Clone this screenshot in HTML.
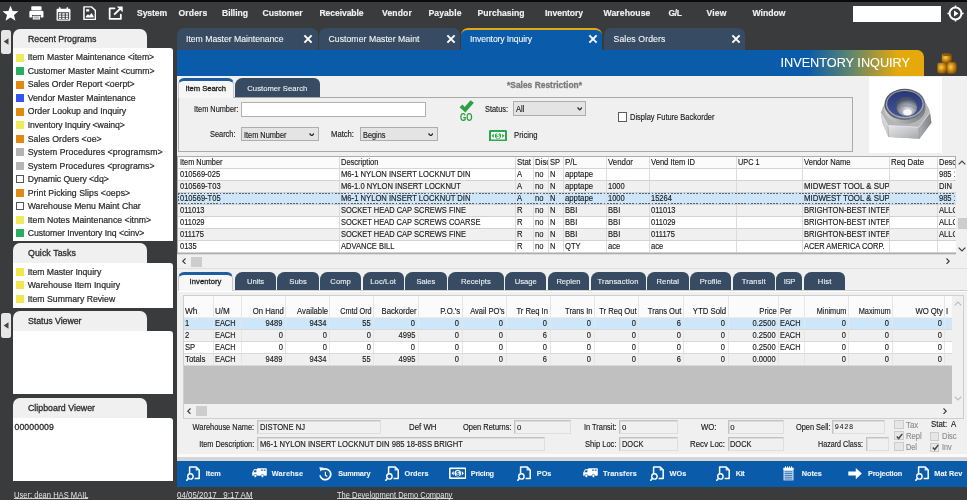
<!DOCTYPE html>
<html lang="en"><head><meta charset="utf-8"><title>Inventory Inquiry</title><style>
html,body{margin:0;padding:0;overflow:hidden;}
html{width:967px;height:500px;}
body{width:967px;height:500px;overflow:hidden;background:#3a3b3d;font-family:"Liberation Sans", sans-serif;font-size:11px;position:relative;}
div,span.t,svg{position:absolute;box-sizing:border-box;}
span.t{white-space:pre;display:block;-webkit-text-stroke:0.3px;}
span.x{-webkit-text-stroke:0.15px;}
#root{left:0;top:0;width:967px;height:500px;will-change:transform;overflow:hidden;}
</style></head>
<body>
<div id="root">
<div style="left:0px;top:0px;width:967px;height:2px;background:#0a0a0a;"></div>
<svg style="left:1.5px;top:5.3px" width="17" height="16.3" viewBox="0 0 19 18"><path fill="#fff" d="M9.5 0.6 L11.9 6.6 L18.4 7 L13.4 11.1 L15 17.4 L9.5 13.9 L4 17.4 L5.6 11.1 L0.6 7 L7.1 6.6 Z"/></svg>
<svg style="left:29.2px;top:6.1px" width="14.8" height="14.3" viewBox="0 0 17 16" preserveAspectRatio="none"><g fill="#fff"><rect x="2.6" y="0.3" width="11.8" height="4.4" rx="0.8"/><path d="M2 5.2h13a1.6 1.6 0 0 1 1.6 1.6v5.2a1 1 0 0 1-1 1H13.6V10H3.4v3H1.4a1 1 0 0 1-1-1V6.8A1.6 1.6 0 0 1 2 5.2z"/><rect x="4.3" y="10.9" width="8.4" height="4.3" rx="0.5"/><rect x="5.2" y="11.6" width="6.6" height="2.6" fill="#b9b9b9"/></g></svg>
<svg style="left:55.5px;top:6.5px" width="15" height="14.2" viewBox="0 0 16 16" preserveAspectRatio="none"><g fill="#fff"><rect x="3" y="0.3" width="1.8" height="3" rx="0.6"/><rect x="11.2" y="0.3" width="1.8" height="3" rx="0.6"/><path fill-rule="evenodd" d="M1.6 2h12.8a1 1 0 0 1 1 1v11.4a1 1 0 0 1-1 1H1.6a1 1 0 0 1-1-1V3a1 1 0 0 1 1-1zM2 6v8h12V6z"/><rect x="3" y="7" width="2.6" height="1.7"/><rect x="6.7" y="7" width="2.6" height="1.7"/><rect x="10.4" y="7" width="2.6" height="1.7"/><rect x="3" y="9.5" width="2.6" height="1.7"/><rect x="6.7" y="9.5" width="2.6" height="1.7"/><rect x="10.4" y="9.5" width="2.6" height="1.7"/><rect x="3" y="12" width="2.6" height="1.5"/><rect x="6.7" y="12" width="2.6" height="1.5"/><rect x="10.4" y="12" width="2.6" height="1.5"/></g></svg>
<svg style="left:82.5px;top:6.3px" width="13.4" height="14.3" viewBox="0 0 14 16" preserveAspectRatio="none"><path fill="none" stroke="#fff" stroke-width="1.6" stroke-linejoin="round" d="M1 1h8l4 4v10H1z"/><path fill="#fff" d="M3 11.6l2.2-2.4 1.5 1.5 2.2-3 2.2 3.9v1.2H3z"/><rect x="3.3" y="3.6" width="3.2" height="2.6" fill="#fff"/></svg>
<svg style="left:107.8px;top:6.3px" width="15.8" height="14.4" viewBox="0 0 17 16" preserveAspectRatio="none"><path fill="none" stroke="#fff" stroke-width="1.9" stroke-linejoin="round" stroke-linecap="round" d="M7 2.6H1.8v11.8h12V9.6"/><path fill="none" stroke="#fff" stroke-width="2.1" d="M6.6 9.6L14.6 1.6"/><path fill="#fff" d="M9.4 0.6h6.4v6.4z"/></svg>
<span class="t" style="top:4.700px;height:17.20px;line-height:17.20px;font-size:8.6px;color:#f2f2f2;font-weight:bold;left:137.00px;letter-spacing:-0.096px;-webkit-text-stroke:0.15px;">System</span>
<span class="t" style="top:4.700px;height:17.20px;line-height:17.20px;font-size:8.6px;color:#f2f2f2;font-weight:bold;left:178.50px;letter-spacing:0.135px;-webkit-text-stroke:0.15px;">Orders</span>
<span class="t" style="top:4.700px;height:17.20px;line-height:17.20px;font-size:8.6px;color:#f2f2f2;font-weight:bold;left:222.00px;letter-spacing:-0.038px;-webkit-text-stroke:0.15px;">Billing</span>
<span class="t" style="top:4.700px;height:17.20px;line-height:17.20px;font-size:8.6px;color:#f2f2f2;font-weight:bold;left:262.50px;letter-spacing:-0.016px;-webkit-text-stroke:0.15px;">Customer</span>
<span class="t" style="top:4.700px;height:17.20px;line-height:17.20px;font-size:8.6px;color:#f2f2f2;font-weight:bold;left:319.50px;letter-spacing:-0.092px;-webkit-text-stroke:0.15px;">Receivable</span>
<span class="t" style="top:4.700px;height:17.20px;line-height:17.20px;font-size:8.6px;color:#f2f2f2;font-weight:bold;left:382.00px;letter-spacing:0.143px;-webkit-text-stroke:0.15px;">Vendor</span>
<span class="t" style="top:4.700px;height:17.20px;line-height:17.20px;font-size:8.6px;color:#f2f2f2;font-weight:bold;left:428.50px;letter-spacing:0.071px;-webkit-text-stroke:0.15px;">Payable</span>
<span class="t" style="top:4.700px;height:17.20px;line-height:17.20px;font-size:8.6px;color:#f2f2f2;font-weight:bold;left:477.50px;letter-spacing:0.019px;-webkit-text-stroke:0.15px;">Purchasing</span>
<span class="t" style="top:4.700px;height:17.20px;line-height:17.20px;font-size:8.6px;color:#f2f2f2;font-weight:bold;left:545.00px;letter-spacing:-0.076px;-webkit-text-stroke:0.15px;">Inventory</span>
<span class="t" style="top:4.700px;height:17.20px;line-height:17.20px;font-size:8.6px;color:#f2f2f2;font-weight:bold;left:603.50px;letter-spacing:0.109px;-webkit-text-stroke:0.15px;">Warehouse</span>
<span class="t" style="top:4.700px;height:17.20px;line-height:17.20px;font-size:8.6px;color:#f2f2f2;font-weight:bold;left:668.50px;letter-spacing:-0.443px;-webkit-text-stroke:0.15px;">G/L</span>
<span class="t" style="top:4.700px;height:17.20px;line-height:17.20px;font-size:8.6px;color:#f2f2f2;font-weight:bold;left:706.50px;letter-spacing:0.141px;-webkit-text-stroke:0.15px;">View</span>
<span class="t" style="top:4.700px;height:17.20px;line-height:17.20px;font-size:8.6px;color:#f2f2f2;font-weight:bold;left:752.50px;letter-spacing:0.023px;-webkit-text-stroke:0.15px;">Window</span>
<div style="left:852.5px;top:6px;width:88.5px;height:15.5px;background:#ffffff;"></div>
<svg style="left:947px;top:5px" width="17" height="17" viewBox="0 0 17 17"><circle cx="8.5" cy="8.5" r="5.9" fill="none" stroke="#fff" stroke-width="2"/><path fill="#fff" d="M7 5.6l4.4 2.9L7 11.4z"/><g stroke="#fff" stroke-width="1.6"><path d="M8.5 0.4v2.4M8.5 14.2v2.4M0.4 8.5h2.4M14.2 8.5h2.4"/></g></svg>
<div style="left:1px;top:30px;width:9.5px;height:23.5px;background:#e6e6e6;border-radius:2.5px;"></div>
<svg style="left:2.5px;top:38.25px" width="6" height="7" viewBox="0 0 6 7"><path fill="#444" d="M5.5 0.3v6.4L0.6 3.5z"/></svg>
<div style="left:1px;top:313px;width:9.5px;height:24.5px;background:#e6e6e6;border-radius:2.5px;"></div>
<svg style="left:2.5px;top:321.75px" width="6" height="7" viewBox="0 0 6 7"><path fill="#444" d="M5.5 0.3v6.4L0.6 3.5z"/></svg>
<div style="left:13px;top:29px;width:133.5px;height:20.4px;background:#f0f0f0;border-radius:7px 7px 0 0;"></div>
<span class="t" style="top:30.500px;height:17.60px;line-height:17.60px;font-size:8.8px;color:#2c2c2c;left:28.00px;">Recent Programs</span>
<div style="left:13px;top:48.4px;width:159.9px;height:192.5px;background:#ffffff;border-radius:0 3px 0 0;"></div>
<div style="left:16px;top:53.5px;width:8px;height:8px;background:#f0ea5a;"></div>
<span class="t" style="top:48.600px;height:17.40px;line-height:17.40px;font-size:8.7px;color:#2c2c2c;left:27.70px;letter-spacing:-0.017px;-webkit-text-stroke:0.22px;">Item Master Maintenance &lt;item&gt;</span>
<div style="left:16px;top:67.02px;width:8px;height:8px;background:#27ae60;"></div>
<span class="t" style="top:62.600px;height:17.40px;line-height:17.40px;font-size:8.7px;color:#2c2c2c;left:27.70px;letter-spacing:0.018px;-webkit-text-stroke:0.22px;">Customer Master Maint &lt;cumm&gt;</span>
<div style="left:16px;top:80.54px;width:8px;height:8px;background:#e08a10;"></div>
<span class="t" style="top:75.600px;height:17.40px;line-height:17.40px;font-size:8.7px;color:#2c2c2c;left:27.70px;letter-spacing:-0.008px;-webkit-text-stroke:0.22px;">Sales Order Report &lt;oerpt&gt;</span>
<div style="left:16px;top:94.06px;width:8px;height:8px;background:#3355ee;"></div>
<span class="t" style="top:89.600px;height:17.40px;line-height:17.40px;font-size:8.7px;color:#2c2c2c;left:27.70px;letter-spacing:-0.027px;-webkit-text-stroke:0.22px;">Vendor Master Maintenance</span>
<div style="left:16px;top:107.58px;width:8px;height:8px;background:#e08a10;"></div>
<span class="t" style="top:102.600px;height:17.40px;line-height:17.40px;font-size:8.7px;color:#2c2c2c;left:27.70px;-webkit-text-stroke:0.22px;">Order Lookup and Inquiry</span>
<div style="left:16px;top:121.1px;width:8px;height:8px;background:#f0ea5a;"></div>
<span class="t" style="top:116.600px;height:17.40px;line-height:17.40px;font-size:8.7px;color:#2c2c2c;left:27.70px;letter-spacing:-0.099px;-webkit-text-stroke:0.22px;">Inventory Inquiry &lt;wainq&gt;</span>
<div style="left:16px;top:134.62px;width:8px;height:8px;background:#e08a10;"></div>
<span class="t" style="top:130.600px;height:17.40px;line-height:17.40px;font-size:8.7px;color:#2c2c2c;left:27.70px;letter-spacing:0.063px;-webkit-text-stroke:0.22px;">Sales Orders &lt;oe&gt;</span>
<div style="left:16px;top:148.14px;width:8px;height:8px;background:#b4b4b4;"></div>
<span class="t" style="top:143.600px;height:17.40px;line-height:17.40px;font-size:8.7px;color:#2c2c2c;left:27.70px;letter-spacing:0.093px;-webkit-text-stroke:0.22px;">System Procedures &lt;programsm&gt;</span>
<div style="left:16px;top:161.65999999999997px;width:8px;height:8px;background:#b4b4b4;"></div>
<span class="t" style="top:157.600px;height:17.40px;line-height:17.40px;font-size:8.7px;color:#2c2c2c;left:27.70px;letter-spacing:0.069px;-webkit-text-stroke:0.22px;">System Procedures &lt;programs&gt;</span>
<div style="left:16px;top:175.17999999999998px;width:8px;height:8px;background:#fff;border:1px solid #555;"></div>
<span class="t" style="top:170.600px;height:17.40px;line-height:17.40px;font-size:8.7px;color:#2c2c2c;left:27.70px;letter-spacing:-0.061px;-webkit-text-stroke:0.22px;">Dynamic Query &lt;dq&gt;</span>
<div style="left:16px;top:188.7px;width:8px;height:8px;background:#e08a10;"></div>
<span class="t" style="top:184.600px;height:17.40px;line-height:17.40px;font-size:8.7px;color:#2c2c2c;left:27.70px;letter-spacing:0.060px;-webkit-text-stroke:0.22px;">Print Picking Slips &lt;oeps&gt;</span>
<div style="left:16px;top:202.21999999999997px;width:8px;height:8px;background:#fff;border:1px solid #555;"></div>
<span class="t" style="top:197.600px;height:17.40px;line-height:17.40px;font-size:8.7px;color:#2c2c2c;left:27.70px;letter-spacing:-0.006px;-webkit-text-stroke:0.22px;">Warehouse Menu Maint Char</span>
<div style="left:16px;top:215.74px;width:8px;height:8px;background:#f0ea5a;"></div>
<span class="t" style="top:211.600px;height:17.40px;line-height:17.40px;font-size:8.7px;color:#2c2c2c;left:27.70px;letter-spacing:0.012px;-webkit-text-stroke:0.22px;">Item Notes Maintenance &lt;itnm&gt;</span>
<div style="left:16px;top:229.26px;width:8px;height:8px;background:#27ae60;"></div>
<span class="t" style="top:224.600px;height:17.40px;line-height:17.40px;font-size:8.7px;color:#2c2c2c;left:27.70px;letter-spacing:-0.062px;-webkit-text-stroke:0.22px;">Customer Inventory Inq &lt;cinv&gt;</span>
<div style="left:13px;top:243px;width:133.5px;height:20.5px;background:#f0f0f0;border-radius:7px 7px 0 0;"></div>
<span class="t" style="top:244.500px;height:17.60px;line-height:17.60px;font-size:8.8px;color:#2c2c2c;left:28.00px;letter-spacing:0.067px;">Quick Tasks</span>
<div style="left:13px;top:262.5px;width:159.9px;height:45.5px;background:#ffffff;border-radius:0 3px 0 0;"></div>
<div style="left:16px;top:267.9px;width:8px;height:8px;background:#f0e84e;"></div>
<span class="t" style="top:263.600px;height:17.40px;line-height:17.40px;font-size:8.7px;color:#2c2c2c;left:27.70px;letter-spacing:-0.045px;-webkit-text-stroke:0.22px;">Item Master Inquiry</span>
<div style="left:16px;top:281.4px;width:8px;height:8px;background:#f0e84e;"></div>
<span class="t" style="top:276.600px;height:17.40px;line-height:17.40px;font-size:8.7px;color:#2c2c2c;left:27.70px;letter-spacing:0.027px;-webkit-text-stroke:0.22px;">Warehouse Item Inquiry</span>
<div style="left:16px;top:294.9px;width:8px;height:8px;background:#f0e84e;"></div>
<span class="t" style="top:290.600px;height:17.40px;line-height:17.40px;font-size:8.7px;color:#2c2c2c;left:27.70px;letter-spacing:0.006px;-webkit-text-stroke:0.22px;">Item Summary Review</span>
<div style="left:13px;top:311px;width:133.5px;height:20.5px;background:#f0f0f0;border-radius:7px 7px 0 0;"></div>
<span class="t" style="top:312.500px;height:17.60px;line-height:17.60px;font-size:8.8px;color:#2c2c2c;left:28.00px;letter-spacing:-0.048px;">Status Viewer</span>
<div style="left:13px;top:330.5px;width:159.9px;height:63.0px;background:#ffffff;border-radius:0 3px 0 0;"></div>
<div style="left:13px;top:398px;width:133.5px;height:20.5px;background:#f0f0f0;border-radius:7px 7px 0 0;"></div>
<span class="t" style="top:399.500px;height:17.60px;line-height:17.60px;font-size:8.8px;color:#2c2c2c;left:28.00px;letter-spacing:0.011px;">Clipboard Viewer</span>
<div style="left:13px;top:417.5px;width:159.9px;height:63.0px;background:#ffffff;border-radius:0 3px 0 0;"></div>
<span class="t" style="top:418.600px;height:17.40px;line-height:17.40px;font-size:8.7px;color:#2c2c2c;left:14.50px;letter-spacing:0.105px;">00000009</span>
<span class="t x" style="top:487.600px;height:16.40px;line-height:16.40px;font-size:8.2px;color:#e4e4e4;left:13.50px;transform:scaleX(0.9249);transform-origin:left center;-webkit-text-stroke:0;">User: dean HAS MAIL</span>
<div style="left:13.5px;top:498.4px;width:74.5px;height:1px;background:#cfcfcf;"></div>
<span class="t x" style="top:487.600px;height:16.40px;line-height:16.40px;font-size:8.2px;color:#e4e4e4;left:177.00px;transform:scaleX(0.9699);transform-origin:left center;-webkit-text-stroke:0;">04/05/2017   9:17 AM</span>
<div style="left:177px;top:498.4px;width:75.5px;height:1px;background:#cfcfcf;"></div>
<span class="t x" style="top:487.600px;height:16.40px;line-height:16.40px;font-size:8.2px;color:#e4e4e4;left:337.30px;transform:scaleX(0.9146);transform-origin:left center;-webkit-text-stroke:0;">The Development Demo Company</span>
<div style="left:337.3px;top:498.4px;width:115.3px;height:1px;background:#cfcfcf;"></div>
<div style="left:176.5px;top:28px;width:141.0px;height:22px;background:#374c62;border-radius:7px 7px 0 0;"></div>
<span class="t" style="top:30.600px;height:17.40px;line-height:17.40px;font-size:8.7px;color:#f4f6f8;left:186.00px;letter-spacing:-0.023px;-webkit-text-stroke:0.1px;">Item Master Maintenance</span>
<svg style="left:303.0px;top:34.3px" width="10" height="10" viewBox="0 0 10 10"><path stroke="#fff" stroke-width="2" fill="none" d="M1.4 1.4L8.6 8.6M8.6 1.4L1.4 8.6"/></svg>
<div style="left:319px;top:28px;width:141px;height:22px;background:#374c62;border-radius:7px 7px 0 0;"></div>
<span class="t" style="top:30.600px;height:17.40px;line-height:17.40px;font-size:8.7px;color:#f4f6f8;left:328.50px;letter-spacing:0.034px;-webkit-text-stroke:0.1px;">Customer Master Maint</span>
<svg style="left:445.5px;top:34.3px" width="10" height="10" viewBox="0 0 10 10"><path stroke="#fff" stroke-width="2" fill="none" d="M1.4 1.4L8.6 8.6M8.6 1.4L1.4 8.6"/></svg>
<div style="left:460.5px;top:27.5px;width:141.5px;height:23px;background:#0a5caa;border-radius:7px 7px 0 0;border-top:2.5px solid #e5a90c;"></div>
<span class="t" style="top:30.600px;height:17.40px;line-height:17.40px;font-size:8.7px;color:#f4f6f8;left:470.00px;letter-spacing:-0.131px;-webkit-text-stroke:0.1px;">Inventory Inquiry</span>
<svg style="left:587.5px;top:34.3px" width="10" height="10" viewBox="0 0 10 10"><path stroke="#fff" stroke-width="2" fill="none" d="M1.4 1.4L8.6 8.6M8.6 1.4L1.4 8.6"/></svg>
<div style="left:604px;top:28px;width:141px;height:22px;background:#374c62;border-radius:7px 7px 0 0;"></div>
<span class="t" style="top:30.600px;height:17.40px;line-height:17.40px;font-size:8.7px;color:#f4f6f8;left:613.50px;letter-spacing:0.108px;-webkit-text-stroke:0.1px;">Sales Orders</span>
<svg style="left:730.5px;top:34.3px" width="10" height="10" viewBox="0 0 10 10"><path stroke="#fff" stroke-width="2" fill="none" d="M1.4 1.4L8.6 8.6M8.6 1.4L1.4 8.6"/></svg>
<div style="left:176.5px;top:49.5px;width:747.5px;height:26px;background:linear-gradient(90deg,#0a5caa 0,#0a5caa 84.5%,#5c8470 90%,#e5a90c 96.5%,#e5a90c 100%);border-radius:0 7px 0 0;"></div>
<span class="t" style="top:50.600px;height:25.40px;line-height:25.40px;font-size:12.7px;color:#fff;left:780.50px;-webkit-text-stroke:0.1px;">INVENTORY INQUIRY</span>
<svg style="left:935px;top:51px;filter:blur(0.35px)" width="24" height="25" viewBox="-1 -1 24 25">
<defs><radialGradient id="gb" cx="0.38" cy="0.42" r="0.75"><stop offset="0" stop-color="#f7d24e"/><stop offset="0.4" stop-color="#d18f16"/><stop offset="0.8" stop-color="#8a5308"/><stop offset="1" stop-color="#5a3505"/></radialGradient></defs>
<rect x="5.8" y="1.6" width="10" height="9.4" rx="1.6" fill="url(#gb)"/>
<ellipse cx="10.8" cy="2.9" rx="4.2" ry="1.1" fill="#7a4a08" opacity="0.75"/>
<rect x="1.4" y="10.8" width="10" height="10.6" rx="1.6" fill="url(#gb)"/>
<rect x="11.2" y="10.2" width="9.6" height="11.6" rx="1.6" fill="url(#gb)"/></svg>
<div style="left:176.5px;top:75.5px;width:790.5px;height:386px;background:#f0f0f0;"></div>
<div style="left:178px;top:96.5px;width:675px;height:55px;border:1px solid #a9a9a9;"></div>
<div style="left:178px;top:78px;width:55.5px;height:19.5px;background:#f7f7f7;border-radius:6px 6px 0 0;border-top:3px solid #1d5c9e;border-left:1px solid #c8c8c8;border-right:1px solid #c8c8c8;"></div>
<span class="t" style="top:81.150px;height:15.30px;line-height:15.30px;font-size:7.65px;color:#222;left:185.50px;letter-spacing:-0.064px;">Item Search</span>
<div style="left:235px;top:78px;width:84.60000000000002px;height:18.5px;background:#374c62;border-radius:7.500px 6px 0 0;"></div>
<span class="t" style="top:81.150px;height:15.30px;line-height:15.30px;font-size:7.65px;color:#f0f3f6;left:247.30px;letter-spacing:0.036px;-webkit-text-stroke:0.1px;">Customer Search</span>
<span class="t" style="top:76.900px;height:16.80px;line-height:16.80px;font-size:8.4px;color:#7a7a7a;font-weight:bold;left:507.00px;letter-spacing:0.027px;">*Sales Restriction*</span>
<span class="t x" style="top:100.600px;height:17.40px;line-height:17.40px;font-size:8.7px;color:#1a1a1a;left:193.80px;transform:scaleX(0.8456);transform-origin:left center;">Item Number:</span>
<div style="left:240.5px;top:102px;width:185px;height:14.5px;background:#fff;border:1px solid #b0b0b0;"></div>
<span class="t x" style="top:125.600px;height:17.40px;line-height:17.40px;font-size:8.7px;color:#1a1a1a;left:210.00px;transform:scaleX(0.8513);transform-origin:left center;">Search:</span>
<div style="left:240.5px;top:127px;width:78.0px;height:14.300000000000011px;background:#e4e4e4;border:1px solid #adadad;"></div>
<span class="t x" style="top:126.600px;height:17.40px;line-height:17.40px;font-size:8.7px;color:#1a1a1a;left:243.50px;transform:scaleX(0.8463);transform-origin:left center;">Item Number</span>
<svg style="left:308.9px;top:132.85px" width="5.6" height="3.6" viewBox="0 0 5.6 3.6"><path stroke="#2a2a2a" stroke-width="1.35" fill="none" d="M0.5 0.5L2.8 2.9L5.1 0.5"/></svg>
<span class="t x" style="top:125.600px;height:17.40px;line-height:17.40px;font-size:8.7px;color:#1a1a1a;left:331.00px;transform:scaleX(0.8820);transform-origin:left center;">Match:</span>
<div style="left:359.5px;top:127px;width:78.0px;height:14.300000000000011px;background:#e4e4e4;border:1px solid #adadad;"></div>
<span class="t x" style="top:126.600px;height:17.40px;line-height:17.40px;font-size:8.7px;color:#1a1a1a;left:362.50px;transform:scaleX(0.8466);transform-origin:left center;">Begins</span>
<svg style="left:427.9px;top:132.85px" width="5.6" height="3.6" viewBox="0 0 5.6 3.6"><path stroke="#2a2a2a" stroke-width="1.35" fill="none" d="M0.5 0.5L2.8 2.9L5.1 0.5"/></svg>
<svg style="left:458.6px;top:100.2px" width="15.4" height="12.8" viewBox="0 0 16 13"><path fill="#2ea043" d="M0.6 7.4l3-2.800 2.300 2.500L12 0.200l3.500 2.400L6.600 12.900z"/></svg>
<span class="t x" style="top:107.600px;height:20.40px;line-height:20.40px;font-size:10.2px;color:#2ea043;font-weight:bold;left:459.50px;transform:scaleX(0.7819);transform-origin:left center;-webkit-text-stroke:0.1px;">GO</span>
<span class="t x" style="top:100.600px;height:17.40px;line-height:17.40px;font-size:8.7px;color:#1a1a1a;left:485.00px;transform:scaleX(0.8504);transform-origin:left center;">Status:</span>
<div style="left:513px;top:101px;width:73.29999999999995px;height:14.5px;background:#e4e4e4;border:1px solid #adadad;"></div>
<span class="t x" style="top:100.600px;height:17.40px;line-height:17.40px;font-size:8.7px;color:#1a1a1a;left:516.00px;transform:scaleX(0.8803);transform-origin:left center;">All</span>
<svg style="left:576.6999999999999px;top:106.95px" width="5.6" height="3.6" viewBox="0 0 5.6 3.6"><path stroke="#2a2a2a" stroke-width="1.35" fill="none" d="M0.5 0.5L2.8 2.9L5.1 0.5"/></svg>
<svg style="left:488.5px;top:129.5px" width="18" height="11.5" viewBox="0 0 18 11.5"><rect x="0" y="0" width="18" height="11.5" rx="1.2" fill="#2aa84a"/><rect x="2" y="2" width="14" height="7.5" fill="#fff"/><path fill="#2aa84a" d="M2.6 5.75l2.2-2.3v4.6zM15.4 5.75l-2.2-2.3v4.6z"/><circle cx="9" cy="5.75" r="3.1" fill="#2aa84a"/><text x="9" y="8.1" font-size="6.4" font-weight="bold" font-family="Liberation Sans, sans-serif" fill="#fff" text-anchor="middle">$</text></svg>
<span class="t x" style="top:126.600px;height:17.40px;line-height:17.40px;font-size:8.7px;color:#1a1a1a;left:514.30px;transform:scaleX(0.8847);transform-origin:left center;">Pricing</span>
<div style="left:617.5px;top:112.3px;width:9.5px;height:9.5px;background:#fff;border:1px solid #5a5a5a;"></div>
<span class="t x" style="top:108.600px;height:17.40px;line-height:17.40px;font-size:8.7px;color:#1a1a1a;left:630.00px;transform:scaleX(0.8621);transform-origin:left center;">Display Future Backorder</span>
<div style="left:869px;top:77px;width:73px;height:75.5px;background:#ffffff;"></div>
<svg style="left:876px;top:84px;filter:blur(0.5px)" width="60" height="60" viewBox="0 0 500 500">
<defs>
<linearGradient id="nf" x1="0" y1="0" x2="1" y2="1"><stop offset="0" stop-color="#e6e6e7"/><stop offset="0.55" stop-color="#c6c7c9"/><stop offset="1" stop-color="#a6a7ab"/></linearGradient>
<linearGradient id="nr" x1="0" y1="0" x2="1" y2="0"><stop offset="0" stop-color="#aeafb2"/><stop offset="1" stop-color="#808286"/></linearGradient>
<linearGradient id="nc" x1="0" y1="0" x2="1" y2="0"><stop offset="0" stop-color="#d2d2d4"/><stop offset="0.45" stop-color="#a8a9ad"/><stop offset="1" stop-color="#7c7e83"/></linearGradient>
<linearGradient id="nrim" x1="0" y1="0" x2="1" y2="1"><stop offset="0" stop-color="#454950"/><stop offset="1" stop-color="#7d8087"/></linearGradient>
<linearGradient id="nbl" x1="0" y1="0" x2="0" y2="1"><stop offset="0" stop-color="#2a3774"/><stop offset="1" stop-color="#4254a0"/></linearGradient>
<radialGradient id="nh" cx="0.55" cy="0.68" r="0.62"><stop offset="0" stop-color="#f4f4f6"/><stop offset="0.3" stop-color="#c2c4c9"/><stop offset="0.7" stop-color="#8a909e"/><stop offset="1" stop-color="#4f576c"/></radialGradient>
</defs>
<path d="M40 240 L60 185 L120 120 L400 130 L445 215 L462 322 L362 456 L104 441 L55 330 Z" fill="#b4b5b8"/>
<path d="M40 240 L55 330 L104 441 L100 346 Z" fill="#d2d2d4"/>
<path d="M100 346 L104 441 L362 456 L356 361 Z" fill="url(#nf)"/>
<path d="M356 361 L362 456 L462 322 L450 236 Z" fill="url(#nr)"/>
<path d="M40 240 L100 346 L356 361 L450 236" fill="none" stroke="#ededee" stroke-width="6" stroke-linejoin="round"/>
<path d="M100 346 L104 441 M356 361 L362 456" fill="none" stroke="#8d8f93" stroke-width="4"/>
<ellipse cx="241" cy="202" rx="172" ry="130" fill="url(#nc)"/>
<ellipse cx="240" cy="170" rx="170" ry="130" fill="url(#nrim)"/>
<ellipse cx="240" cy="168" rx="157" ry="117" fill="#a3a7b0"/>
<ellipse cx="240" cy="165" rx="147" ry="107" fill="url(#nbl)"/>
<ellipse cx="252" cy="188" rx="95" ry="81" fill="#485068"/>
<ellipse cx="256" cy="195" rx="86" ry="72" fill="url(#nh)"/>
<path d="M180 178 Q256 120 334 186 M176 206 Q256 150 338 214" fill="none" stroke="#7a8192" stroke-width="7" opacity="0.7"/>
<ellipse cx="262" cy="236" rx="36" ry="24" fill="#f8f8fa"/>
</svg>
<div style="left:176.5px;top:155.5px;width:779px;height:98.3px;background:#ffffff;border:1px solid #adadad;"></div>
<div style="left:177.5px;top:156.5px;width:777px;height:11.5px;background:#fbfbfb;"></div>
<div style="left:177.5px;top:168.0px;width:778px;height:12.0px;background:#ffffff;"></div>
<div style="left:177.5px;top:180.0px;width:778px;height:12.0px;background:#f0f0f0;"></div>
<div style="left:177.5px;top:192.0px;width:778px;height:12.0px;background:#cde6f9;"></div>
<div style="left:177.5px;top:204.0px;width:778px;height:12.0px;background:#f0f0f0;"></div>
<div style="left:177.5px;top:216.0px;width:778px;height:12.0px;background:#ffffff;"></div>
<div style="left:177.5px;top:228.0px;width:778px;height:12.0px;background:#f0f0f0;"></div>
<div style="left:177.5px;top:240.0px;width:778px;height:12.0px;background:#ffffff;"></div>
<div style="left:178.5px;top:155.5px;width:160.3px;height:96.5px;overflow:hidden;">
<span class="t x" style="top:-1.400px;height:17.40px;line-height:17.40px;font-size:8.7px;color:#1a1a1a;left:1.70px;transform:scaleX(0.8463);transform-origin:left center;">Item Number</span>
<span class="t x" style="top:10.600px;height:17.40px;line-height:17.40px;font-size:8.7px;color:#1a1a1a;left:1.70px;transform:scaleX(0.8660);transform-origin:left center;">010569-025</span>
<span class="t x" style="top:22.600px;height:17.40px;line-height:17.40px;font-size:8.7px;color:#1a1a1a;left:1.70px;transform:scaleX(0.8660);transform-origin:left center;">010569-T03</span>
<span class="t x" style="top:34.600px;height:17.40px;line-height:17.40px;font-size:8.7px;color:#1a1a1a;left:1.70px;transform:scaleX(0.8660);transform-origin:left center;">010569-T05</span>
<span class="t x" style="top:46.600px;height:17.40px;line-height:17.40px;font-size:8.7px;color:#1a1a1a;left:1.70px;transform:scaleX(0.8660);transform-origin:left center;">011013</span>
<span class="t x" style="top:58.600px;height:17.40px;line-height:17.40px;font-size:8.7px;color:#1a1a1a;left:1.70px;transform:scaleX(0.8660);transform-origin:left center;">011029</span>
<span class="t x" style="top:70.600px;height:17.40px;line-height:17.40px;font-size:8.7px;color:#1a1a1a;left:1.70px;transform:scaleX(0.8660);transform-origin:left center;">011175</span>
<span class="t x" style="top:82.600px;height:17.40px;line-height:17.40px;font-size:8.7px;color:#1a1a1a;left:1.70px;transform:scaleX(0.8660);transform-origin:left center;">0135</span>
</div>
<div style="left:338.8px;top:156.5px;width:1px;height:95.5px;background:#dcdcdc;"></div>
<div style="left:339.8px;top:155.5px;width:175.2px;height:96.5px;overflow:hidden;">
<span class="t x" style="top:-1.400px;height:17.40px;line-height:17.40px;font-size:8.7px;color:#1a1a1a;left:1.10px;transform:scaleX(0.8604);transform-origin:left center;">Description</span>
<span class="t x" style="top:10.600px;height:17.40px;line-height:17.40px;font-size:8.7px;color:#1a1a1a;left:1.10px;transform:scaleX(0.8795);transform-origin:left center;">M6-1 NYLON INSERT LOCKNUT DIN</span>
<span class="t x" style="top:22.600px;height:17.40px;line-height:17.40px;font-size:8.7px;color:#1a1a1a;left:1.10px;transform:scaleX(0.8742);transform-origin:left center;">M6-1.0 NYLON INSERT LOCKNUT</span>
<span class="t x" style="top:34.600px;height:17.40px;line-height:17.40px;font-size:8.7px;color:#1a1a1a;left:1.10px;transform:scaleX(0.8795);transform-origin:left center;">M6-1 NYLON INSERT LOCKNUT DIN</span>
<span class="t x" style="top:46.600px;height:17.40px;line-height:17.40px;font-size:8.7px;color:#1a1a1a;left:1.10px;transform:scaleX(0.8622);transform-origin:left center;">SOCKET HEAD CAP SCREWS FINE</span>
<span class="t x" style="top:58.600px;height:17.40px;line-height:17.40px;font-size:8.7px;color:#1a1a1a;left:1.10px;transform:scaleX(0.8617);transform-origin:left center;">SOCKET HEAD CAP SCREWS COARSE</span>
<span class="t x" style="top:70.600px;height:17.40px;line-height:17.40px;font-size:8.7px;color:#1a1a1a;left:1.10px;transform:scaleX(0.8622);transform-origin:left center;">SOCKET HEAD CAP SCREWS FINE</span>
<span class="t x" style="top:82.600px;height:17.40px;line-height:17.40px;font-size:8.7px;color:#1a1a1a;left:1.10px;transform:scaleX(0.8679);transform-origin:left center;">ADVANCE BILL</span>
</div>
<div style="left:515px;top:156.5px;width:1px;height:95.5px;background:#dcdcdc;"></div>
<div style="left:516px;top:155.5px;width:17.299999999999955px;height:96.5px;overflow:hidden;">
<span class="t x" style="top:-1.400px;height:17.40px;line-height:17.40px;font-size:8.7px;color:#1a1a1a;left:1.10px;transform:scaleX(0.9051);transform-origin:left center;">Stat</span>
<span class="t x" style="top:10.600px;height:17.40px;line-height:17.40px;font-size:8.7px;color:#1a1a1a;left:1.10px;transform:scaleX(0.8750);transform-origin:left center;">A</span>
<span class="t x" style="top:22.600px;height:17.40px;line-height:17.40px;font-size:8.7px;color:#1a1a1a;left:1.10px;transform:scaleX(0.8750);transform-origin:left center;">A</span>
<span class="t x" style="top:34.600px;height:17.40px;line-height:17.40px;font-size:8.7px;color:#1a1a1a;left:1.10px;transform:scaleX(0.8750);transform-origin:left center;">A</span>
<span class="t x" style="top:46.600px;height:17.40px;line-height:17.40px;font-size:8.7px;color:#1a1a1a;left:1.10px;transform:scaleX(0.8750);transform-origin:left center;">R</span>
<span class="t x" style="top:58.600px;height:17.40px;line-height:17.40px;font-size:8.7px;color:#1a1a1a;left:1.10px;transform:scaleX(0.8750);transform-origin:left center;">R</span>
<span class="t x" style="top:70.600px;height:17.40px;line-height:17.40px;font-size:8.7px;color:#1a1a1a;left:1.10px;transform:scaleX(0.8750);transform-origin:left center;">R</span>
<span class="t x" style="top:82.600px;height:17.40px;line-height:17.40px;font-size:8.7px;color:#1a1a1a;left:1.10px;transform:scaleX(0.8750);transform-origin:left center;">R</span>
</div>
<div style="left:533.3px;top:156.5px;width:1px;height:95.5px;background:#dcdcdc;"></div>
<div style="left:534.3px;top:155.5px;width:13.700000000000045px;height:96.5px;overflow:hidden;">
<span class="t x" style="top:-1.400px;height:17.40px;line-height:17.40px;font-size:8.7px;color:#1a1a1a;left:1.10px;transform:scaleX(0.8991);transform-origin:left center;">Disc</span>
<span class="t x" style="top:10.600px;height:17.40px;line-height:17.40px;font-size:8.7px;color:#1a1a1a;left:1.10px;transform:scaleX(0.8750);transform-origin:left center;">no</span>
<span class="t x" style="top:22.600px;height:17.40px;line-height:17.40px;font-size:8.7px;color:#1a1a1a;left:1.10px;transform:scaleX(0.8750);transform-origin:left center;">no</span>
<span class="t x" style="top:34.600px;height:17.40px;line-height:17.40px;font-size:8.7px;color:#1a1a1a;left:1.10px;transform:scaleX(0.8750);transform-origin:left center;">no</span>
<span class="t x" style="top:46.600px;height:17.40px;line-height:17.40px;font-size:8.7px;color:#1a1a1a;left:1.10px;transform:scaleX(0.8750);transform-origin:left center;">no</span>
<span class="t x" style="top:58.600px;height:17.40px;line-height:17.40px;font-size:8.7px;color:#1a1a1a;left:1.10px;transform:scaleX(0.8750);transform-origin:left center;">no</span>
<span class="t x" style="top:70.600px;height:17.40px;line-height:17.40px;font-size:8.7px;color:#1a1a1a;left:1.10px;transform:scaleX(0.8750);transform-origin:left center;">no</span>
<span class="t x" style="top:82.600px;height:17.40px;line-height:17.40px;font-size:8.7px;color:#1a1a1a;left:1.10px;transform:scaleX(0.8750);transform-origin:left center;">no</span>
</div>
<div style="left:548px;top:156.5px;width:1px;height:95.5px;background:#dcdcdc;"></div>
<div style="left:549px;top:155.5px;width:14px;height:96.5px;overflow:hidden;">
<span class="t x" style="top:-1.400px;height:17.40px;line-height:17.40px;font-size:8.7px;color:#1a1a1a;left:1.10px;transform:scaleX(0.8625);transform-origin:left center;">SP</span>
<span class="t x" style="top:10.600px;height:17.40px;line-height:17.40px;font-size:8.7px;color:#1a1a1a;left:1.10px;transform:scaleX(0.8750);transform-origin:left center;">N</span>
<span class="t x" style="top:22.600px;height:17.40px;line-height:17.40px;font-size:8.7px;color:#1a1a1a;left:1.10px;transform:scaleX(0.8750);transform-origin:left center;">N</span>
<span class="t x" style="top:34.600px;height:17.40px;line-height:17.40px;font-size:8.7px;color:#1a1a1a;left:1.10px;transform:scaleX(0.8750);transform-origin:left center;">N</span>
<span class="t x" style="top:46.600px;height:17.40px;line-height:17.40px;font-size:8.7px;color:#1a1a1a;left:1.10px;transform:scaleX(0.8750);transform-origin:left center;">N</span>
<span class="t x" style="top:58.600px;height:17.40px;line-height:17.40px;font-size:8.7px;color:#1a1a1a;left:1.10px;transform:scaleX(0.8750);transform-origin:left center;">N</span>
<span class="t x" style="top:70.600px;height:17.40px;line-height:17.40px;font-size:8.7px;color:#1a1a1a;left:1.10px;transform:scaleX(0.8750);transform-origin:left center;">N</span>
<span class="t x" style="top:82.600px;height:17.40px;line-height:17.40px;font-size:8.7px;color:#1a1a1a;left:1.10px;transform:scaleX(0.8750);transform-origin:left center;">N</span>
</div>
<div style="left:563px;top:156.5px;width:1px;height:95.5px;background:#dcdcdc;"></div>
<div style="left:564px;top:155.5px;width:41.799999999999955px;height:96.5px;overflow:hidden;">
<span class="t x" style="top:-1.400px;height:17.40px;line-height:17.40px;font-size:8.7px;color:#1a1a1a;left:1.10px;transform:scaleX(0.9198);transform-origin:left center;">P/L</span>
<span class="t x" style="top:10.600px;height:17.40px;line-height:17.40px;font-size:8.7px;color:#1a1a1a;left:1.10px;transform:scaleX(0.8915);transform-origin:left center;">apptape</span>
<span class="t x" style="top:22.600px;height:17.40px;line-height:17.40px;font-size:8.7px;color:#1a1a1a;left:1.10px;transform:scaleX(0.8915);transform-origin:left center;">apptape</span>
<span class="t x" style="top:34.600px;height:17.40px;line-height:17.40px;font-size:8.7px;color:#1a1a1a;left:1.10px;transform:scaleX(0.8915);transform-origin:left center;">apptape</span>
<span class="t x" style="top:46.600px;height:17.40px;line-height:17.40px;font-size:8.7px;color:#1a1a1a;left:1.10px;transform:scaleX(0.8750);transform-origin:left center;">BBI</span>
<span class="t x" style="top:58.600px;height:17.40px;line-height:17.40px;font-size:8.7px;color:#1a1a1a;left:1.10px;transform:scaleX(0.8750);transform-origin:left center;">BBI</span>
<span class="t x" style="top:70.600px;height:17.40px;line-height:17.40px;font-size:8.7px;color:#1a1a1a;left:1.10px;transform:scaleX(0.8750);transform-origin:left center;">BBI</span>
<span class="t x" style="top:82.600px;height:17.40px;line-height:17.40px;font-size:8.7px;color:#1a1a1a;left:1.10px;transform:scaleX(0.8750);transform-origin:left center;">QTY</span>
</div>
<div style="left:605.8px;top:156.5px;width:1px;height:95.5px;background:#dcdcdc;"></div>
<div style="left:606.8px;top:155.5px;width:42.0px;height:96.5px;overflow:hidden;">
<span class="t x" style="top:-1.400px;height:17.40px;line-height:17.40px;font-size:8.7px;color:#1a1a1a;left:1.10px;transform:scaleX(0.9075);transform-origin:left center;">Vendor</span>
<span class="t x" style="top:22.600px;height:17.40px;line-height:17.40px;font-size:8.7px;color:#1a1a1a;left:1.10px;transform:scaleX(0.8660);transform-origin:left center;">1000</span>
<span class="t x" style="top:34.600px;height:17.40px;line-height:17.40px;font-size:8.7px;color:#1a1a1a;left:1.10px;transform:scaleX(0.8660);transform-origin:left center;">1000</span>
<span class="t x" style="top:46.600px;height:17.40px;line-height:17.40px;font-size:8.7px;color:#1a1a1a;left:1.10px;transform:scaleX(0.8750);transform-origin:left center;">BBI</span>
<span class="t x" style="top:58.600px;height:17.40px;line-height:17.40px;font-size:8.7px;color:#1a1a1a;left:1.10px;transform:scaleX(0.8750);transform-origin:left center;">BBI</span>
<span class="t x" style="top:70.600px;height:17.40px;line-height:17.40px;font-size:8.7px;color:#1a1a1a;left:1.10px;transform:scaleX(0.8750);transform-origin:left center;">BBI</span>
<span class="t x" style="top:82.600px;height:17.40px;line-height:17.40px;font-size:8.7px;color:#1a1a1a;left:1.10px;transform:scaleX(0.8750);transform-origin:left center;">ace</span>
</div>
<div style="left:648.8px;top:156.5px;width:1px;height:95.5px;background:#dcdcdc;"></div>
<div style="left:649.8px;top:155.5px;width:85.70000000000005px;height:96.5px;overflow:hidden;">
<span class="t x" style="top:-1.400px;height:17.40px;line-height:17.40px;font-size:8.7px;color:#1a1a1a;left:1.10px;transform:scaleX(0.8759);transform-origin:left center;">Vend Item ID</span>
<span class="t x" style="top:34.600px;height:17.40px;line-height:17.40px;font-size:8.7px;color:#1a1a1a;left:1.10px;transform:scaleX(0.8660);transform-origin:left center;">15264</span>
<span class="t x" style="top:46.600px;height:17.40px;line-height:17.40px;font-size:8.7px;color:#1a1a1a;left:1.10px;transform:scaleX(0.8660);transform-origin:left center;">011013</span>
<span class="t x" style="top:58.600px;height:17.40px;line-height:17.40px;font-size:8.7px;color:#1a1a1a;left:1.10px;transform:scaleX(0.8660);transform-origin:left center;">011029</span>
<span class="t x" style="top:70.600px;height:17.40px;line-height:17.40px;font-size:8.7px;color:#1a1a1a;left:1.10px;transform:scaleX(0.8660);transform-origin:left center;">011175</span>
<span class="t x" style="top:82.600px;height:17.40px;line-height:17.40px;font-size:8.7px;color:#1a1a1a;left:1.10px;transform:scaleX(0.8750);transform-origin:left center;">ace</span>
</div>
<div style="left:735.5px;top:156.5px;width:1px;height:95.5px;background:#dcdcdc;"></div>
<div style="left:736.5px;top:155.5px;width:65.29999999999995px;height:96.5px;overflow:hidden;">
<span class="t x" style="top:-1.400px;height:17.40px;line-height:17.40px;font-size:8.7px;color:#1a1a1a;left:1.10px;transform:scaleX(0.8400);transform-origin:left center;">UPC 1</span>
</div>
<div style="left:801.8px;top:156.5px;width:1px;height:95.5px;background:#dcdcdc;"></div>
<div style="left:802.8px;top:155.5px;width:86.5px;height:96.5px;overflow:hidden;">
<span class="t x" style="top:-1.400px;height:17.40px;line-height:17.40px;font-size:8.7px;color:#1a1a1a;left:1.10px;transform:scaleX(0.8753);transform-origin:left center;">Vendor Name</span>
<span class="t x" style="top:22.600px;height:17.40px;line-height:17.40px;font-size:8.7px;color:#1a1a1a;left:1.10px;transform:scaleX(0.9060);transform-origin:left center;">MIDWEST TOOL &amp; SUPPLY</span>
<span class="t x" style="top:34.600px;height:17.40px;line-height:17.40px;font-size:8.7px;color:#1a1a1a;left:1.10px;transform:scaleX(0.9060);transform-origin:left center;">MIDWEST TOOL &amp; SUPPLY</span>
<span class="t x" style="top:46.600px;height:17.40px;line-height:17.40px;font-size:8.7px;color:#1a1a1a;left:1.10px;transform:scaleX(0.8750);transform-origin:left center;">BRIGHTON-BEST INTERNATIONAL</span>
<span class="t x" style="top:58.600px;height:17.40px;line-height:17.40px;font-size:8.7px;color:#1a1a1a;left:1.10px;transform:scaleX(0.8750);transform-origin:left center;">BRIGHTON-BEST INTERNATIONAL</span>
<span class="t x" style="top:70.600px;height:17.40px;line-height:17.40px;font-size:8.7px;color:#1a1a1a;left:1.10px;transform:scaleX(0.8750);transform-origin:left center;">BRIGHTON-BEST INTERNATIONAL</span>
<span class="t x" style="top:82.600px;height:17.40px;line-height:17.40px;font-size:8.7px;color:#1a1a1a;left:1.10px;transform:scaleX(0.8565);transform-origin:left center;">ACER AMERICA CORP.</span>
</div>
<div style="left:889.3px;top:156.5px;width:1px;height:95.5px;background:#dcdcdc;"></div>
<div style="left:890.3px;top:155.5px;width:47.0px;height:96.5px;overflow:hidden;">
<span class="t x" style="top:-1.400px;height:17.40px;line-height:17.40px;font-size:8.7px;color:#1a1a1a;left:1.10px;transform:scaleX(0.8991);transform-origin:left center;">Req Date</span>
</div>
<div style="left:937.3px;top:156.5px;width:1px;height:95.5px;background:#dcdcdc;"></div>
<div style="left:938.3px;top:155.5px;width:17.200000000000045px;height:96.5px;overflow:hidden;">
<span class="t x" style="top:-1.400px;height:17.40px;line-height:17.40px;font-size:8.7px;color:#1a1a1a;left:1.10px;transform:scaleX(0.8587);transform-origin:left center;">Desc</span>
<span class="t x" style="top:10.600px;height:17.40px;line-height:17.40px;font-size:8.7px;color:#1a1a1a;left:1.10px;transform:scaleX(0.8660);transform-origin:left center;">985 18-8SS</span>
<span class="t x" style="top:22.600px;height:17.40px;line-height:17.40px;font-size:8.7px;color:#1a1a1a;left:1.10px;transform:scaleX(0.8750);transform-origin:left center;">DIN</span>
<span class="t x" style="top:34.600px;height:17.40px;line-height:17.40px;font-size:8.7px;color:#1a1a1a;left:1.10px;transform:scaleX(0.8660);transform-origin:left center;">985 18-8SS</span>
<span class="t x" style="top:46.600px;height:17.40px;line-height:17.40px;font-size:8.7px;color:#1a1a1a;left:1.10px;transform:scaleX(0.8750);transform-origin:left center;">ALLOY STEEL</span>
<span class="t x" style="top:58.600px;height:17.40px;line-height:17.40px;font-size:8.7px;color:#1a1a1a;left:1.10px;transform:scaleX(0.8750);transform-origin:left center;">ALLOY STEEL</span>
<span class="t x" style="top:70.600px;height:17.40px;line-height:17.40px;font-size:8.7px;color:#1a1a1a;left:1.10px;transform:scaleX(0.8750);transform-origin:left center;">ALLOY STEEL</span>
</div>
<div style="left:177.5px;top:167.5px;width:778px;height:1px;background:#d5d5d5;"></div>
<div style="left:177.5px;top:179.5px;width:778px;height:1px;background:#d2d2d2;"></div>
<div style="left:177.5px;top:191.5px;width:778px;height:1px;background:#d2d2d2;"></div>
<div style="left:177.5px;top:203.5px;width:778px;height:1px;background:#d2d2d2;"></div>
<div style="left:177.5px;top:215.5px;width:778px;height:1px;background:#d2d2d2;"></div>
<div style="left:177.5px;top:227.5px;width:778px;height:1px;background:#d2d2d2;"></div>
<div style="left:177.5px;top:239.5px;width:778px;height:1px;background:#d2d2d2;"></div>
<div style="left:177.5px;top:251.5px;width:778px;height:1px;background:#d2d2d2;"></div>
<div style="left:177.5px;top:192.8px;width:778px;height:1px;background:repeating-linear-gradient(90deg,#566070 0,#566070 1.8px,transparent 1.8px,transparent 3.2px);"></div>
<div style="left:177.5px;top:203.2px;width:778px;height:1px;background:repeating-linear-gradient(90deg,#566070 0,#566070 1.8px,transparent 1.8px,transparent 3.2px);"></div>
<div style="left:177.5px;top:192.8px;width:1px;height:10.4px;background:repeating-linear-gradient(180deg,#566070 0,#566070 1.8px,transparent 1.8px,transparent 3.2px);"></div>
<div style="left:955.5px;top:156.5px;width:11.5px;height:98px;background:#f0f0f0;"></div>
<div style="left:957.5px;top:217.5px;width:9.5px;height:11.5px;background:#cdcdcd;"></div>
<svg style="left:957.5px;top:160px" width="8" height="5" viewBox="0 0 8 5"><path stroke="#444" stroke-width="1.3" fill="none" d="M0.7 4.4L4 1.1L7.3 4.4"/></svg>
<svg style="left:957.5px;top:246.500px" width="8" height="5" viewBox="0 0 8 5"><path stroke="#444" stroke-width="1.3" fill="none" d="M0.7 0.6L4 3.9L7.3 0.6"/></svg>
<div style="left:176.5px;top:253.8px;width:779px;height:14.5px;background:#f0f0f0;border-top:1px solid #dcdcdc;"></div>
<div style="left:190.5px;top:256.5px;width:11.5px;height:10px;background:#cdcdcd;"></div>
<svg style="left:181.500px;top:257.500px" width="4" height="6.4" viewBox="0 0 4 6.4"><path stroke="#333" stroke-width="1.1" fill="none" d="M3.5 0.5L0.8 3.2L3.5 5.9"/></svg>
<svg style="left:945.5px;top:257.500px" width="4" height="6.4" viewBox="0 0 4 6.4"><path stroke="#333" stroke-width="1.1" fill="none" d="M0.5 0.5L3.2 3.2L0.5 5.9"/></svg>
<div style="left:176.5px;top:268.3px;width:790px;height:1px;background:#e0e0e0;"></div>
<div style="left:178px;top:290px;width:789px;height:1px;background:#d0d0d0;"></div>
<div style="left:178px;top:291px;width:789px;height:1px;background:#ffffff;"></div>
<div style="left:178px;top:271.5px;width:55px;height:19.5px;background:#f7f7f7;border-radius:6px 6px 0 0;border-top:3px solid #1d5c9e;border-left:1px solid #c8c8c8;border-right:1px solid #c8c8c8;"></div>
<span class="t" style="top:274.150px;height:15.30px;line-height:15.30px;font-size:7.65px;color:#222;left:189.50px;letter-spacing:0.062px;">Inventory</span>
<div style="left:234.9px;top:271.5px;width:41.29999999999998px;height:18.5px;background:#374c62;border-radius:7.500px 6px 0 0;"></div>
<span class="t" style="top:274.150px;height:15.30px;line-height:15.30px;font-size:7.65px;color:#f0f3f6;left:247.05px;letter-spacing:-0.084px;-webkit-text-stroke:0.1px;">Units</span>
<div style="left:277.4px;top:271.5px;width:41.30000000000001px;height:18.5px;background:#374c62;border-radius:7.500px 6px 0 0;"></div>
<span class="t" style="top:274.150px;height:15.30px;line-height:15.30px;font-size:7.65px;color:#f0f3f6;left:289.30px;letter-spacing:0.020px;-webkit-text-stroke:0.1px;">Subs</span>
<div style="left:319.9px;top:271.5px;width:41.400000000000034px;height:18.5px;background:#374c62;border-radius:7.500px 6px 0 0;"></div>
<span class="t" style="top:274.150px;height:15.30px;line-height:15.30px;font-size:7.65px;color:#f0f3f6;left:330.35px;letter-spacing:0.027px;-webkit-text-stroke:0.1px;">Comp</span>
<div style="left:362.5px;top:271.5px;width:41.30000000000001px;height:18.5px;background:#374c62;border-radius:7.500px 6px 0 0;"></div>
<span class="t" style="top:274.150px;height:15.30px;line-height:15.30px;font-size:7.65px;color:#f0f3f6;left:370.15px;letter-spacing:0.132px;-webkit-text-stroke:0.1px;">Loc/Lot</span>
<div style="left:405px;top:271.5px;width:41.80000000000001px;height:18.5px;background:#374c62;border-radius:7.500px 6px 0 0;"></div>
<span class="t" style="top:274.150px;height:15.30px;line-height:15.30px;font-size:7.65px;color:#f0f3f6;left:416.40px;letter-spacing:-0.025px;-webkit-text-stroke:0.1px;">Sales</span>
<div style="left:448px;top:271.5px;width:55.80000000000001px;height:18.5px;background:#374c62;border-radius:7.500px 6px 0 0;"></div>
<span class="t" style="top:274.150px;height:15.30px;line-height:15.30px;font-size:7.65px;color:#f0f3f6;left:460.90px;letter-spacing:0.033px;-webkit-text-stroke:0.1px;">Receipts</span>
<div style="left:505px;top:271.5px;width:41.299999999999955px;height:18.5px;background:#374c62;border-radius:7.500px 6px 0 0;"></div>
<span class="t" style="top:274.150px;height:15.30px;line-height:15.30px;font-size:7.65px;color:#f0f3f6;left:514.65px;letter-spacing:-0.019px;-webkit-text-stroke:0.1px;">Usage</span>
<div style="left:547.5px;top:271.5px;width:41.799999999999955px;height:18.5px;background:#374c62;border-radius:7.500px 6px 0 0;"></div>
<span class="t" style="top:274.150px;height:15.30px;line-height:15.30px;font-size:7.65px;color:#f0f3f6;left:556.40px;letter-spacing:-0.036px;-webkit-text-stroke:0.1px;">Replen</span>
<div style="left:590.5px;top:271.5px;width:55.0px;height:18.5px;background:#374c62;border-radius:7.500px 6px 0 0;"></div>
<span class="t" style="top:274.150px;height:15.30px;line-height:15.30px;font-size:7.65px;color:#f0f3f6;left:597.50px;letter-spacing:0.124px;-webkit-text-stroke:0.1px;">Transaction</span>
<div style="left:646.7px;top:271.5px;width:42.09999999999991px;height:18.5px;background:#374c62;border-radius:7.500px 6px 0 0;"></div>
<span class="t" style="top:274.150px;height:15.30px;line-height:15.30px;font-size:7.65px;color:#f0f3f6;left:656.50px;letter-spacing:0.068px;-webkit-text-stroke:0.1px;">Rental</span>
<div style="left:690px;top:271.5px;width:41.299999999999955px;height:18.5px;background:#374c62;border-radius:7.500px 6px 0 0;"></div>
<span class="t" style="top:274.150px;height:15.30px;line-height:15.30px;font-size:7.65px;color:#f0f3f6;left:699.65px;letter-spacing:0.047px;-webkit-text-stroke:0.1px;">Profile</span>
<div style="left:732.5px;top:271.5px;width:42.5px;height:18.5px;background:#374c62;border-radius:7.500px 6px 0 0;"></div>
<span class="t" style="top:274.150px;height:15.30px;line-height:15.30px;font-size:7.65px;color:#f0f3f6;left:741.75px;letter-spacing:0.132px;-webkit-text-stroke:0.1px;">Transit</span>
<div style="left:776.2px;top:271.5px;width:26.299999999999955px;height:18.5px;background:#374c62;border-radius:7.500px 6px 0 0;"></div>
<span class="t" style="top:274.150px;height:15.30px;line-height:15.30px;font-size:7.65px;color:#f0f3f6;left:783.85px;letter-spacing:-0.443px;-webkit-text-stroke:0.1px;">ISP</span>
<div style="left:803.7px;top:271.5px;width:41.799999999999955px;height:18.5px;background:#374c62;border-radius:7.500px 6px 0 0;"></div>
<span class="t" style="top:274.150px;height:15.30px;line-height:15.30px;font-size:7.65px;color:#f0f3f6;left:817.85px;letter-spacing:0.082px;-webkit-text-stroke:0.1px;">Hist</span>
<div style="left:182.5px;top:295px;width:781.5px;height:124px;background:#f0f0f0;border:1px solid #cfcfcf;"></div>
<div style="left:183.5px;top:296px;width:768px;height:21px;background:#fbfbfb;"></div>
<div style="left:183.5px;top:365.0px;width:768px;height:39.0px;background:#c0c0c0;"></div>
<div style="left:183.5px;top:317.0px;width:768.0px;height:12.0px;background:#cde6f9;"></div>
<div style="left:183.5px;top:329.0px;width:768.0px;height:12.0px;background:#f0f0f0;"></div>
<div style="left:183.5px;top:341.0px;width:768.0px;height:12.0px;background:#ffffff;"></div>
<div style="left:183.5px;top:353.0px;width:768.0px;height:12.0px;background:#f0f0f0;"></div>
<div style="left:184.5px;top:295px;width:28.5px;height:70.0px;overflow:hidden;">
<span class="t x" style="top:7.600px;height:17.40px;line-height:17.40px;font-size:8.7px;color:#1a1a1a;left:0.80px;transform:scaleX(0.9516);transform-origin:left center;">Wh</span>
<span class="t x" style="top:19.600px;height:17.40px;line-height:17.40px;font-size:8.7px;color:#1a1a1a;left:0.80px;transform:scaleX(0.8660);transform-origin:left center;">1</span>
<span class="t x" style="top:31.600px;height:17.40px;line-height:17.40px;font-size:8.7px;color:#1a1a1a;left:0.80px;transform:scaleX(0.8660);transform-origin:left center;">2</span>
<span class="t x" style="top:43.600px;height:17.40px;line-height:17.40px;font-size:8.7px;color:#1a1a1a;left:0.80px;transform:scaleX(0.8750);transform-origin:left center;">SP</span>
<span class="t x" style="top:55.600px;height:17.40px;line-height:17.40px;font-size:8.7px;color:#1a1a1a;left:0.80px;transform:scaleX(0.9030);transform-origin:left center;">Totals</span>
</div>
<div style="left:213px;top:296px;width:1px;height:69.0px;background:#e6e6e6;"></div>
<div style="left:214px;top:295px;width:26.80000000000001px;height:70.0px;overflow:hidden;">
<span class="t x" style="top:7.600px;height:17.40px;line-height:17.40px;font-size:8.7px;color:#1a1a1a;left:0.80px;transform:scaleX(0.9286);transform-origin:left center;">U/M</span>
<span class="t x" style="top:19.600px;height:17.40px;line-height:17.40px;font-size:8.7px;color:#1a1a1a;left:0.80px;transform:scaleX(0.8492);transform-origin:left center;">EACH</span>
<span class="t x" style="top:31.600px;height:17.40px;line-height:17.40px;font-size:8.7px;color:#1a1a1a;left:0.80px;transform:scaleX(0.8492);transform-origin:left center;">EACH</span>
<span class="t x" style="top:43.600px;height:17.40px;line-height:17.40px;font-size:8.7px;color:#1a1a1a;left:0.80px;transform:scaleX(0.8492);transform-origin:left center;">EACH</span>
<span class="t x" style="top:55.600px;height:17.40px;line-height:17.40px;font-size:8.7px;color:#1a1a1a;left:0.80px;transform:scaleX(0.8492);transform-origin:left center;">EACH</span>
</div>
<div style="left:240.8px;top:296px;width:1px;height:69.0px;background:#e6e6e6;"></div>
<div style="left:241.8px;top:295px;width:43.19999999999999px;height:70.0px;overflow:hidden;">
<span class="t x" style="top:7.600px;height:17.40px;line-height:17.40px;font-size:8.7px;color:#1a1a1a;right:1.30px;transform:scaleX(0.8913);transform-origin:right center;">On Hand</span>
<span class="t x" style="top:19.600px;height:17.40px;line-height:17.40px;font-size:8.7px;color:#1a1a1a;right:2.60px;transform:scaleX(0.8660);transform-origin:right center;">9489</span>
<span class="t x" style="top:31.600px;height:17.40px;line-height:17.40px;font-size:8.7px;color:#1a1a1a;right:2.60px;transform:scaleX(0.8660);transform-origin:right center;">0</span>
<span class="t x" style="top:43.600px;height:17.40px;line-height:17.40px;font-size:8.7px;color:#1a1a1a;right:2.60px;transform:scaleX(0.8660);transform-origin:right center;">0</span>
<span class="t x" style="top:55.600px;height:17.40px;line-height:17.40px;font-size:8.7px;color:#1a1a1a;right:2.60px;transform:scaleX(0.8660);transform-origin:right center;">9489</span>
</div>
<div style="left:285px;top:296px;width:1px;height:69.0px;background:#e6e6e6;"></div>
<div style="left:286px;top:295px;width:43px;height:70.0px;overflow:hidden;">
<span class="t x" style="top:7.600px;height:17.40px;line-height:17.40px;font-size:8.7px;color:#1a1a1a;right:1.30px;transform:scaleX(0.8830);transform-origin:right center;">Available</span>
<span class="t x" style="top:19.600px;height:17.40px;line-height:17.40px;font-size:8.7px;color:#1a1a1a;right:2.60px;transform:scaleX(0.8660);transform-origin:right center;">9434</span>
<span class="t x" style="top:31.600px;height:17.40px;line-height:17.40px;font-size:8.7px;color:#1a1a1a;right:2.60px;transform:scaleX(0.8660);transform-origin:right center;">0</span>
<span class="t x" style="top:43.600px;height:17.40px;line-height:17.40px;font-size:8.7px;color:#1a1a1a;right:2.60px;transform:scaleX(0.8660);transform-origin:right center;">0</span>
<span class="t x" style="top:55.600px;height:17.40px;line-height:17.40px;font-size:8.7px;color:#1a1a1a;right:2.60px;transform:scaleX(0.8660);transform-origin:right center;">9434</span>
</div>
<div style="left:329px;top:296px;width:1px;height:69.0px;background:#e6e6e6;"></div>
<div style="left:330px;top:295px;width:43px;height:70.0px;overflow:hidden;">
<span class="t x" style="top:7.600px;height:17.40px;line-height:17.40px;font-size:8.7px;color:#1a1a1a;right:1.30px;transform:scaleX(0.8365);transform-origin:right center;">Cmtd Ord</span>
<span class="t x" style="top:19.600px;height:17.40px;line-height:17.40px;font-size:8.7px;color:#1a1a1a;right:2.60px;transform:scaleX(0.8660);transform-origin:right center;">55</span>
<span class="t x" style="top:31.600px;height:17.40px;line-height:17.40px;font-size:8.7px;color:#1a1a1a;right:2.60px;transform:scaleX(0.8660);transform-origin:right center;">0</span>
<span class="t x" style="top:43.600px;height:17.40px;line-height:17.40px;font-size:8.7px;color:#1a1a1a;right:2.60px;transform:scaleX(0.8660);transform-origin:right center;">0</span>
<span class="t x" style="top:55.600px;height:17.40px;line-height:17.40px;font-size:8.7px;color:#1a1a1a;right:2.60px;transform:scaleX(0.8660);transform-origin:right center;">55</span>
</div>
<div style="left:373px;top:296px;width:1px;height:69.0px;background:#e6e6e6;"></div>
<div style="left:374px;top:295px;width:43.5px;height:70.0px;overflow:hidden;">
<span class="t x" style="top:7.600px;height:17.40px;line-height:17.40px;font-size:8.7px;color:#1a1a1a;right:1.30px;transform:scaleX(0.8836);transform-origin:right center;">Backorder</span>
<span class="t x" style="top:19.600px;height:17.40px;line-height:17.40px;font-size:8.7px;color:#1a1a1a;right:2.60px;transform:scaleX(0.8660);transform-origin:right center;">0</span>
<span class="t x" style="top:31.600px;height:17.40px;line-height:17.40px;font-size:8.7px;color:#1a1a1a;right:2.60px;transform:scaleX(0.8660);transform-origin:right center;">4995</span>
<span class="t x" style="top:43.600px;height:17.40px;line-height:17.40px;font-size:8.7px;color:#1a1a1a;right:2.60px;transform:scaleX(0.8660);transform-origin:right center;">0</span>
<span class="t x" style="top:55.600px;height:17.40px;line-height:17.40px;font-size:8.7px;color:#1a1a1a;right:2.60px;transform:scaleX(0.8660);transform-origin:right center;">4995</span>
</div>
<div style="left:417.5px;top:296px;width:1px;height:69.0px;background:#e6e6e6;"></div>
<div style="left:418.5px;top:295px;width:43.0px;height:70.0px;overflow:hidden;">
<span class="t x" style="top:7.600px;height:17.40px;line-height:17.40px;font-size:8.7px;color:#1a1a1a;right:1.30px;transform:scaleX(0.8982);transform-origin:right center;">P.O.'s</span>
<span class="t x" style="top:19.600px;height:17.40px;line-height:17.40px;font-size:8.7px;color:#1a1a1a;right:2.60px;transform:scaleX(0.8660);transform-origin:right center;">0</span>
<span class="t x" style="top:31.600px;height:17.40px;line-height:17.40px;font-size:8.7px;color:#1a1a1a;right:2.60px;transform:scaleX(0.8660);transform-origin:right center;">0</span>
<span class="t x" style="top:43.600px;height:17.40px;line-height:17.40px;font-size:8.7px;color:#1a1a1a;right:2.60px;transform:scaleX(0.8660);transform-origin:right center;">0</span>
<span class="t x" style="top:55.600px;height:17.40px;line-height:17.40px;font-size:8.7px;color:#1a1a1a;right:2.60px;transform:scaleX(0.8660);transform-origin:right center;">0</span>
</div>
<div style="left:461.5px;top:296px;width:1px;height:69.0px;background:#e6e6e6;"></div>
<div style="left:462.5px;top:295px;width:43.0px;height:70.0px;overflow:hidden;">
<span class="t x" style="top:7.600px;height:17.40px;line-height:17.40px;font-size:8.7px;color:#1a1a1a;right:1.30px;transform:scaleX(0.8700);transform-origin:right center;">Avail PO's</span>
<span class="t x" style="top:19.600px;height:17.40px;line-height:17.40px;font-size:8.7px;color:#1a1a1a;right:2.60px;transform:scaleX(0.8660);transform-origin:right center;">0</span>
<span class="t x" style="top:31.600px;height:17.40px;line-height:17.40px;font-size:8.7px;color:#1a1a1a;right:2.60px;transform:scaleX(0.8660);transform-origin:right center;">0</span>
<span class="t x" style="top:43.600px;height:17.40px;line-height:17.40px;font-size:8.7px;color:#1a1a1a;right:2.60px;transform:scaleX(0.8660);transform-origin:right center;">0</span>
<span class="t x" style="top:55.600px;height:17.40px;line-height:17.40px;font-size:8.7px;color:#1a1a1a;right:2.60px;transform:scaleX(0.8660);transform-origin:right center;">0</span>
</div>
<div style="left:505.5px;top:296px;width:1px;height:69.0px;background:#e6e6e6;"></div>
<div style="left:506.5px;top:295px;width:43.0px;height:70.0px;overflow:hidden;">
<span class="t x" style="top:7.600px;height:17.40px;line-height:17.40px;font-size:8.7px;color:#1a1a1a;right:1.30px;transform:scaleX(0.8777);transform-origin:right center;">Tr Req In</span>
<span class="t x" style="top:19.600px;height:17.40px;line-height:17.40px;font-size:8.7px;color:#1a1a1a;right:2.60px;transform:scaleX(0.8660);transform-origin:right center;">0</span>
<span class="t x" style="top:31.600px;height:17.40px;line-height:17.40px;font-size:8.7px;color:#1a1a1a;right:2.60px;transform:scaleX(0.8660);transform-origin:right center;">6</span>
<span class="t x" style="top:43.600px;height:17.40px;line-height:17.40px;font-size:8.7px;color:#1a1a1a;right:2.60px;transform:scaleX(0.8660);transform-origin:right center;">0</span>
<span class="t x" style="top:55.600px;height:17.40px;line-height:17.40px;font-size:8.7px;color:#1a1a1a;right:2.60px;transform:scaleX(0.8660);transform-origin:right center;">6</span>
</div>
<div style="left:549.5px;top:296px;width:1px;height:69.0px;background:#e6e6e6;"></div>
<div style="left:550.5px;top:295px;width:43.299999999999955px;height:70.0px;overflow:hidden;">
<span class="t x" style="top:7.600px;height:17.40px;line-height:17.40px;font-size:8.7px;color:#1a1a1a;right:1.30px;transform:scaleX(0.8717);transform-origin:right center;">Trans In</span>
<span class="t x" style="top:19.600px;height:17.40px;line-height:17.40px;font-size:8.7px;color:#1a1a1a;right:2.60px;transform:scaleX(0.8660);transform-origin:right center;">0</span>
<span class="t x" style="top:31.600px;height:17.40px;line-height:17.40px;font-size:8.7px;color:#1a1a1a;right:2.60px;transform:scaleX(0.8660);transform-origin:right center;">0</span>
<span class="t x" style="top:43.600px;height:17.40px;line-height:17.40px;font-size:8.7px;color:#1a1a1a;right:2.60px;transform:scaleX(0.8660);transform-origin:right center;">0</span>
<span class="t x" style="top:55.600px;height:17.40px;line-height:17.40px;font-size:8.7px;color:#1a1a1a;right:2.60px;transform:scaleX(0.8660);transform-origin:right center;">0</span>
</div>
<div style="left:593.8px;top:296px;width:1px;height:69.0px;background:#e6e6e6;"></div>
<div style="left:594.8px;top:295px;width:43.200000000000045px;height:70.0px;overflow:hidden;">
<span class="t x" style="top:7.600px;height:17.40px;line-height:17.40px;font-size:8.7px;color:#1a1a1a;right:1.30px;transform:scaleX(0.8791);transform-origin:right center;">Tr Req Out</span>
<span class="t x" style="top:19.600px;height:17.40px;line-height:17.40px;font-size:8.7px;color:#1a1a1a;right:2.60px;transform:scaleX(0.8660);transform-origin:right center;">0</span>
<span class="t x" style="top:31.600px;height:17.40px;line-height:17.40px;font-size:8.7px;color:#1a1a1a;right:2.60px;transform:scaleX(0.8660);transform-origin:right center;">0</span>
<span class="t x" style="top:43.600px;height:17.40px;line-height:17.40px;font-size:8.7px;color:#1a1a1a;right:2.60px;transform:scaleX(0.8660);transform-origin:right center;">0</span>
<span class="t x" style="top:55.600px;height:17.40px;line-height:17.40px;font-size:8.7px;color:#1a1a1a;right:2.60px;transform:scaleX(0.8660);transform-origin:right center;">0</span>
</div>
<div style="left:638px;top:296px;width:1px;height:69.0px;background:#e6e6e6;"></div>
<div style="left:639px;top:295px;width:44px;height:70.0px;overflow:hidden;">
<span class="t x" style="top:7.600px;height:17.40px;line-height:17.40px;font-size:8.7px;color:#1a1a1a;right:1.30px;transform:scaleX(0.8744);transform-origin:right center;">Trans Out</span>
<span class="t x" style="top:19.600px;height:17.40px;line-height:17.40px;font-size:8.7px;color:#1a1a1a;right:2.60px;transform:scaleX(0.8660);transform-origin:right center;">6</span>
<span class="t x" style="top:31.600px;height:17.40px;line-height:17.40px;font-size:8.7px;color:#1a1a1a;right:2.60px;transform:scaleX(0.8660);transform-origin:right center;">0</span>
<span class="t x" style="top:43.600px;height:17.40px;line-height:17.40px;font-size:8.7px;color:#1a1a1a;right:2.60px;transform:scaleX(0.8660);transform-origin:right center;">0</span>
<span class="t x" style="top:55.600px;height:17.40px;line-height:17.40px;font-size:8.7px;color:#1a1a1a;right:2.60px;transform:scaleX(0.8660);transform-origin:right center;">6</span>
</div>
<div style="left:683px;top:296px;width:1px;height:69.0px;background:#e6e6e6;"></div>
<div style="left:684px;top:295px;width:43.5px;height:70.0px;overflow:hidden;">
<span class="t x" style="top:7.600px;height:17.40px;line-height:17.40px;font-size:8.7px;color:#1a1a1a;right:1.30px;transform:scaleX(0.9008);transform-origin:right center;">YTD Sold</span>
<span class="t x" style="top:19.600px;height:17.40px;line-height:17.40px;font-size:8.7px;color:#1a1a1a;right:2.60px;transform:scaleX(0.8660);transform-origin:right center;">0</span>
<span class="t x" style="top:31.600px;height:17.40px;line-height:17.40px;font-size:8.7px;color:#1a1a1a;right:2.60px;transform:scaleX(0.8660);transform-origin:right center;">0</span>
<span class="t x" style="top:43.600px;height:17.40px;line-height:17.40px;font-size:8.7px;color:#1a1a1a;right:2.60px;transform:scaleX(0.8660);transform-origin:right center;">0</span>
<span class="t x" style="top:55.600px;height:17.40px;line-height:17.40px;font-size:8.7px;color:#1a1a1a;right:2.60px;transform:scaleX(0.8660);transform-origin:right center;">0</span>
</div>
<div style="left:727.5px;top:296px;width:1px;height:69.0px;background:#e6e6e6;"></div>
<div style="left:728.5px;top:295px;width:49.5px;height:70.0px;overflow:hidden;">
<span class="t x" style="top:7.600px;height:17.40px;line-height:17.40px;font-size:8.7px;color:#1a1a1a;right:1.30px;transform:scaleX(0.8840);transform-origin:right center;">Price</span>
<span class="t x" style="top:19.600px;height:17.40px;line-height:17.40px;font-size:8.7px;color:#1a1a1a;right:2.60px;transform:scaleX(0.8660);transform-origin:right center;">0.2500</span>
<span class="t x" style="top:31.600px;height:17.40px;line-height:17.40px;font-size:8.7px;color:#1a1a1a;right:2.60px;transform:scaleX(0.8660);transform-origin:right center;">0.2500</span>
<span class="t x" style="top:43.600px;height:17.40px;line-height:17.40px;font-size:8.7px;color:#1a1a1a;right:2.60px;transform:scaleX(0.8660);transform-origin:right center;">0.2500</span>
<span class="t x" style="top:55.600px;height:17.40px;line-height:17.40px;font-size:8.7px;color:#1a1a1a;right:2.60px;transform:scaleX(0.8660);transform-origin:right center;">0.0000</span>
</div>
<div style="left:778px;top:296px;width:1px;height:69.0px;background:#e6e6e6;"></div>
<div style="left:779px;top:295px;width:24.799999999999955px;height:70.0px;overflow:hidden;">
<span class="t x" style="top:7.600px;height:17.40px;line-height:17.40px;font-size:8.7px;color:#1a1a1a;left:0.80px;transform:scaleX(0.8499);transform-origin:left center;">Per</span>
<span class="t x" style="top:19.600px;height:17.40px;line-height:17.40px;font-size:8.7px;color:#1a1a1a;left:0.80px;transform:scaleX(0.8492);transform-origin:left center;">EACH</span>
<span class="t x" style="top:31.600px;height:17.40px;line-height:17.40px;font-size:8.7px;color:#1a1a1a;left:0.80px;transform:scaleX(0.8492);transform-origin:left center;">EACH</span>
<span class="t x" style="top:43.600px;height:17.40px;line-height:17.40px;font-size:8.7px;color:#1a1a1a;left:0.80px;transform:scaleX(0.8492);transform-origin:left center;">EACH</span>
</div>
<div style="left:803.8px;top:296px;width:1px;height:69.0px;background:#e6e6e6;"></div>
<div style="left:804.8px;top:295px;width:43.200000000000045px;height:70.0px;overflow:hidden;">
<span class="t x" style="top:7.600px;height:17.40px;line-height:17.40px;font-size:8.7px;color:#1a1a1a;right:1.30px;transform:scaleX(0.8373);transform-origin:right center;">Minimum</span>
<span class="t x" style="top:19.600px;height:17.40px;line-height:17.40px;font-size:8.7px;color:#1a1a1a;right:2.60px;transform:scaleX(0.8660);transform-origin:right center;">0</span>
<span class="t x" style="top:31.600px;height:17.40px;line-height:17.40px;font-size:8.7px;color:#1a1a1a;right:2.60px;transform:scaleX(0.8660);transform-origin:right center;">0</span>
<span class="t x" style="top:43.600px;height:17.40px;line-height:17.40px;font-size:8.7px;color:#1a1a1a;right:2.60px;transform:scaleX(0.8660);transform-origin:right center;">0</span>
<span class="t x" style="top:55.600px;height:17.40px;line-height:17.40px;font-size:8.7px;color:#1a1a1a;right:2.60px;transform:scaleX(0.8660);transform-origin:right center;">0</span>
</div>
<div style="left:848px;top:296px;width:1px;height:69.0px;background:#e6e6e6;"></div>
<div style="left:849px;top:295px;width:42.5px;height:70.0px;overflow:hidden;">
<span class="t x" style="top:7.600px;height:17.40px;line-height:17.40px;font-size:8.7px;color:#1a1a1a;right:1.30px;transform:scaleX(0.8498);transform-origin:right center;">Maximum</span>
<span class="t x" style="top:19.600px;height:17.40px;line-height:17.40px;font-size:8.7px;color:#1a1a1a;right:2.60px;transform:scaleX(0.8660);transform-origin:right center;">0</span>
<span class="t x" style="top:31.600px;height:17.40px;line-height:17.40px;font-size:8.7px;color:#1a1a1a;right:2.60px;transform:scaleX(0.8660);transform-origin:right center;">0</span>
<span class="t x" style="top:43.600px;height:17.40px;line-height:17.40px;font-size:8.7px;color:#1a1a1a;right:2.60px;transform:scaleX(0.8660);transform-origin:right center;">0</span>
<span class="t x" style="top:55.600px;height:17.40px;line-height:17.40px;font-size:8.7px;color:#1a1a1a;right:2.60px;transform:scaleX(0.8660);transform-origin:right center;">0</span>
</div>
<div style="left:891.5px;top:296px;width:1px;height:69.0px;background:#e6e6e6;"></div>
<div style="left:892.5px;top:295px;width:51.5px;height:70.0px;overflow:hidden;">
<span class="t x" style="top:7.600px;height:17.40px;line-height:17.40px;font-size:8.7px;color:#1a1a1a;right:1.30px;transform:scaleX(0.8902);transform-origin:right center;">WO Qty</span>
<span class="t x" style="top:19.600px;height:17.40px;line-height:17.40px;font-size:8.7px;color:#1a1a1a;right:2.60px;transform:scaleX(0.8660);transform-origin:right center;">0</span>
<span class="t x" style="top:31.600px;height:17.40px;line-height:17.40px;font-size:8.7px;color:#1a1a1a;right:2.60px;transform:scaleX(0.8660);transform-origin:right center;">0</span>
<span class="t x" style="top:43.600px;height:17.40px;line-height:17.40px;font-size:8.7px;color:#1a1a1a;right:2.60px;transform:scaleX(0.8660);transform-origin:right center;">0</span>
<span class="t x" style="top:55.600px;height:17.40px;line-height:17.40px;font-size:8.7px;color:#1a1a1a;right:2.60px;transform:scaleX(0.8660);transform-origin:right center;">0</span>
</div>
<div style="left:944px;top:296px;width:1px;height:69.0px;background:#e6e6e6;"></div>
<div style="left:945px;top:295px;width:6.5px;height:70.0px;overflow:hidden;">
<span class="t x" style="top:7.600px;height:17.40px;line-height:17.40px;font-size:8.7px;color:#1a1a1a;left:0.80px;transform:scaleX(0.8750);transform-origin:left center;">I</span>
</div>
<div style="left:183.5px;top:316.5px;width:768.0px;height:1px;background:#ececec;"></div>
<div style="left:183.5px;top:328.5px;width:768.0px;height:1px;background:#dadada;"></div>
<div style="left:183.5px;top:340.5px;width:768.0px;height:1px;background:#dadada;"></div>
<div style="left:183.5px;top:352.5px;width:768.0px;height:1px;background:#dadada;"></div>
<div style="left:183.5px;top:364.5px;width:768.0px;height:1px;background:#dadada;"></div>
<div style="left:951.5px;top:296px;width:11.5px;height:108px;background:#f0f0f0;"></div>
<svg style="left:953.500px;top:300.500px" width="8" height="5" viewBox="0 0 8 5"><path stroke="#bdbdbd" stroke-width="1.3" fill="none" d="M0.7 4.4L4 1.1L7.3 4.4"/></svg>
<svg style="left:953.500px;top:396px" width="8" height="5" viewBox="0 0 8 5"><path stroke="#bdbdbd" stroke-width="1.3" fill="none" d="M0.7 0.6L4 3.9L7.3 0.6"/></svg>
<div style="left:183.5px;top:404px;width:779.5px;height:14px;background:#f0f0f0;"></div>
<div style="left:195.5px;top:405.6px;width:11.5px;height:10.4px;background:#cdcdcd;"></div>
<svg style="left:187px;top:407.500px" width="4" height="6.4" viewBox="0 0 4 6.4"><path stroke="#333" stroke-width="1.1" fill="none" d="M3.5 0.5L0.8 3.2L3.5 5.9"/></svg>
<svg style="left:942.500px;top:407.500px" width="4" height="6.4" viewBox="0 0 4 6.4"><path stroke="#333" stroke-width="1.1" fill="none" d="M0.5 0.5L3.2 3.2L0.5 5.9"/></svg>
<span class="t x" style="top:418.600px;height:17.40px;line-height:17.40px;font-size:8.7px;color:#1a1a1a;right:713.20px;transform:scaleX(0.8529);transform-origin:right center;">Warehouse Name:</span>
<div style="left:257px;top:419.5px;width:124.30000000000001px;height:14.300000000000011px;background:#f0f0f0;border:1px solid;border-color:#c2c2c2 #dedede #dedede #c2c2c2;box-shadow:inset 1px 1px 0 #dcdcdc;"></div>
<span class="t x" style="top:418.600px;height:17.40px;line-height:17.40px;font-size:8.7px;color:#1a1a1a;left:259.80px;transform:scaleX(0.8738);transform-origin:left center;">DISTONE NJ</span>
<span class="t x" style="top:435.600px;height:17.40px;line-height:17.40px;font-size:8.7px;color:#1a1a1a;right:713.20px;transform:scaleX(0.8437);transform-origin:right center;">Item Description:</span>
<div style="left:257px;top:436.8px;width:288px;height:14.0px;background:#f0f0f0;border:1px solid;border-color:#c2c2c2 #dedede #dedede #c2c2c2;box-shadow:inset 1px 1px 0 #dcdcdc;"></div>
<span class="t x" style="top:435.600px;height:17.40px;line-height:17.40px;font-size:8.7px;color:#1a1a1a;left:259.80px;transform:scaleX(0.8796);transform-origin:left center;">M6-1 NYLON INSERT LOCKNUT DIN 985 18-8SS BRIGHT</span>
<span class="t x" style="top:418.600px;height:17.40px;line-height:17.40px;font-size:8.7px;color:#1a1a1a;left:408.80px;transform:scaleX(0.9044);transform-origin:left center;">Def WH</span>
<span class="t x" style="top:418.600px;height:17.40px;line-height:17.40px;font-size:8.7px;color:#1a1a1a;left:462.50px;transform:scaleX(0.8584);transform-origin:left center;">Open Returns:</span>
<div style="left:514.3px;top:419.5px;width:56.5px;height:14.300000000000011px;background:#f0f0f0;border:1px solid;border-color:#c2c2c2 #dedede #dedede #c2c2c2;box-shadow:inset 1px 1px 0 #dcdcdc;"></div>
<span class="t" style="top:420.000px;height:15.60px;line-height:15.60px;font-size:7.8px;color:#1a1a1a;left:517.10px;-webkit-text-stroke:0.1px;color:#222;">0</span>
<span class="t x" style="top:418.600px;height:17.40px;line-height:17.40px;font-size:8.7px;color:#1a1a1a;left:583.80px;transform:scaleX(0.8518);transform-origin:left center;">In Transit:</span>
<div style="left:619.3px;top:419.5px;width:59.0px;height:14.300000000000011px;background:#f0f0f0;border:1px solid;border-color:#c2c2c2 #dedede #dedede #c2c2c2;box-shadow:inset 1px 1px 0 #dcdcdc;"></div>
<span class="t" style="top:420.000px;height:15.60px;line-height:15.60px;font-size:7.8px;color:#1a1a1a;left:622.10px;-webkit-text-stroke:0.1px;color:#222;">0</span>
<span class="t x" style="top:435.600px;height:17.40px;line-height:17.40px;font-size:8.7px;color:#1a1a1a;left:584.50px;transform:scaleX(0.8693);transform-origin:left center;">Ship Loc:</span>
<div style="left:619.3px;top:436.8px;width:59.0px;height:14.0px;background:#f0f0f0;border:1px solid;border-color:#c2c2c2 #dedede #dedede #c2c2c2;box-shadow:inset 1px 1px 0 #dcdcdc;"></div>
<span class="t x" style="top:435.600px;height:17.40px;line-height:17.40px;font-size:8.7px;color:#1a1a1a;left:622.10px;transform:scaleX(0.8563);transform-origin:left center;">DOCK</span>
<span class="t x" style="top:418.600px;height:17.40px;line-height:17.40px;font-size:8.7px;color:#1a1a1a;left:701.30px;transform:scaleX(0.8921);transform-origin:left center;">WO:</span>
<div style="left:727.5px;top:419.5px;width:56.799999999999955px;height:14.300000000000011px;background:#f0f0f0;border:1px solid;border-color:#c2c2c2 #dedede #dedede #c2c2c2;box-shadow:inset 1px 1px 0 #dcdcdc;"></div>
<span class="t" style="top:420.000px;height:15.60px;line-height:15.60px;font-size:7.8px;color:#1a1a1a;left:730.30px;-webkit-text-stroke:0.1px;color:#222;">0</span>
<span class="t x" style="top:435.600px;height:17.40px;line-height:17.40px;font-size:8.7px;color:#1a1a1a;left:690.00px;transform:scaleX(0.9058);transform-origin:left center;">Recv Loc:</span>
<div style="left:727.5px;top:436.8px;width:56.799999999999955px;height:14.0px;background:#f0f0f0;border:1px solid;border-color:#c2c2c2 #dedede #dedede #c2c2c2;box-shadow:inset 1px 1px 0 #dcdcdc;"></div>
<span class="t x" style="top:435.600px;height:17.40px;line-height:17.40px;font-size:8.7px;color:#1a1a1a;left:730.30px;transform:scaleX(0.8563);transform-origin:left center;">DOCK</span>
<span class="t x" style="top:418.600px;height:17.40px;line-height:17.40px;font-size:8.7px;color:#1a1a1a;left:795.50px;transform:scaleX(0.8502);transform-origin:left center;">Open Sell:</span>
<div style="left:832px;top:419.5px;width:52.799999999999955px;height:14.300000000000011px;background:#f0f0f0;border:1px solid;border-color:#c2c2c2 #dedede #dedede #c2c2c2;box-shadow:inset 1px 1px 0 #dcdcdc;"></div>
<span class="t" style="top:420.300px;height:14.00px;line-height:14.00px;font-size:7px;color:#1a1a1a;font-family:'Liberation Mono', monospace;left:834.80px;letter-spacing:0.547px;-webkit-text-stroke:0.05px;">9428</span>
<span class="t x" style="top:435.600px;height:17.40px;line-height:17.40px;font-size:8.7px;color:#1a1a1a;left:817.50px;transform:scaleX(0.8247);transform-origin:left center;">Hazard Class:</span>
<div style="left:866px;top:436.8px;width:22.5px;height:14.0px;background:#f0f0f0;border:1px solid;border-color:#c2c2c2 #dedede #dedede #c2c2c2;box-shadow:inset 1px 1px 0 #dcdcdc;"></div>
<div style="left:894.4px;top:420.2px;width:9.2px;height:8.6px;background:#e6e6e6;border:1px solid #cbcbcb;"></div>
<span class="t x" style="top:416.600px;height:17.40px;line-height:17.40px;font-size:8.7px;color:#8c8c8c;left:906.20px;transform:scaleX(0.9090);transform-origin:left center;">Tax</span>
<div style="left:894.4px;top:431.4px;width:9.2px;height:9px;background:#e6e6e6;border:1px solid #cbcbcb;"></div>
<svg style="left:895.6px;top:432.59999999999997px" width="7" height="7" viewBox="0 0 7 7"><path stroke="#484848" stroke-width="1.5" fill="none" d="M0.8 3.5L2.7 5.5L6.3 0.9"/></svg>
<span class="t x" style="top:427.600px;height:17.40px;line-height:17.40px;font-size:8.7px;color:#8c8c8c;left:906.20px;transform:scaleX(0.8783);transform-origin:left center;">Repl</span>
<div style="left:894.4px;top:442.4px;width:9.2px;height:9px;background:#e6e6e6;border:1px solid #cbcbcb;"></div>
<span class="t x" style="top:438.600px;height:17.40px;line-height:17.40px;font-size:8.7px;color:#8c8c8c;left:906.20px;transform:scaleX(0.8431);transform-origin:left center;">Del</span>
<span class="t x" style="top:415.600px;height:17.40px;line-height:17.40px;font-size:8.7px;color:#1a1a1a;left:930.90px;transform:scaleX(0.8995);transform-origin:left center;">Stat:  A</span>
<div style="left:930.3px;top:431.6px;width:9.2px;height:9px;background:#e6e6e6;border:1px solid #cbcbcb;"></div>
<span class="t x" style="top:427.600px;height:17.40px;line-height:17.40px;font-size:8.7px;color:#8c8c8c;left:942.10px;transform:scaleX(0.8577);transform-origin:left center;">Disc</span>
<div style="left:930.3px;top:442.6px;width:9.2px;height:9px;background:#e6e6e6;border:1px solid #cbcbcb;"></div>
<svg style="left:931.5px;top:443.8px" width="7" height="7" viewBox="0 0 7 7"><path stroke="#484848" stroke-width="1.5" fill="none" d="M0.8 3.5L2.7 5.5L6.3 0.9"/></svg>
<span class="t x" style="top:438.600px;height:17.40px;line-height:17.40px;font-size:8.7px;color:#8c8c8c;left:942.10px;transform:scaleX(0.8367);transform-origin:left center;">Inv</span>
<div style="left:176.5px;top:454.4px;width:790.5px;height:2.2px;background:#fafafa;"></div>
<div style="left:176.5px;top:456.6px;width:790.5px;height:4.8px;background:#d6d6d6;"></div>
<div style="left:176.5px;top:461.3px;width:790.5px;height:26.2px;background:#0a5caa;"></div>
<svg style="left:186.3px;top:465.70px" width="14" height="15" viewBox="0 0 14 15"><path fill="none" stroke="#fff" stroke-width="1.5" stroke-linejoin="round" d="M3.6 7.2V1h6.6l3 3v8.6H8.6"/><path fill="#fff" d="M9.600 1v3.600h3.600z" opacity="0.850"/><circle cx="4.4" cy="10.4" r="2.7" fill="none" stroke="#fff" stroke-width="1.4"/><path stroke="#fff" stroke-width="1.6" stroke-linecap="round" d="M2.5 12.400L0.8 14.200"/></svg>
<span class="t" style="top:466.500px;height:14.60px;line-height:14.60px;font-size:7.3px;color:#eef3f9;font-weight:bold;left:205.80px;-webkit-text-stroke:0.1px;">Item</span>
<svg style="left:252px;top:468.40px" width="15" height="9.6" viewBox="0 0 15 9.6"><path fill="#fff" d="M0.2 7.7V4.700L2 1.300h3.400v6.400z"/><rect x="5" y="0.200" width="9.800" height="7.500" rx="0.700" fill="#fff"/><path fill="#0a5caa" d="M2.500 2.300h1.900v2H1.500z"/><rect x="9" y="1.400" width="1.900" height="1.600" fill="#5d93c9"/><rect x="11.700" y="1.400" width="1.900" height="1.600" fill="#5d93c9"/><circle cx="3.300" cy="7.900" r="1.500" fill="#fff" stroke="#0a5caa" stroke-width="0.600"/><circle cx="10.400" cy="7.900" r="1.500" fill="#fff" stroke="#0a5caa" stroke-width="0.600"/></svg>
<span class="t" style="top:466.500px;height:14.60px;line-height:14.60px;font-size:7.3px;color:#eef3f9;font-weight:bold;left:271.80px;letter-spacing:0.192px;-webkit-text-stroke:0.1px;">Warehse</span>
<svg style="left:318.3px;top:465.70px" width="14" height="15" viewBox="0 0 14 15"><path fill="none" stroke="#fff" stroke-width="1.700" d="M4.300 3.800A5.400 5.400 0 1 1 2 9.300"/><path fill="#fff" d="M1.300 1.200l4.600 0.600-3.400 3.800z"/><path fill="none" stroke="#fff" stroke-width="1.200" d="M7.400 5.800v3.400l1.800 1.300"/></svg>
<span class="t" style="top:466.500px;height:14.60px;line-height:14.60px;font-size:7.3px;color:#eef3f9;font-weight:bold;left:338.30px;letter-spacing:-0.181px;-webkit-text-stroke:0.1px;">Summary</span>
<svg style="left:384.5px;top:465.70px" width="14" height="15" viewBox="0 0 14 15"><path fill="none" stroke="#fff" stroke-width="1.5" stroke-linejoin="round" d="M3.6 7.2V1h6.6l3 3v8.6H8.6"/><path fill="#fff" d="M9.600 1v3.600h3.600z" opacity="0.850"/><circle cx="4.4" cy="10.4" r="2.7" fill="none" stroke="#fff" stroke-width="1.4"/><path stroke="#fff" stroke-width="1.6" stroke-linecap="round" d="M2.5 12.400L0.8 14.200"/></svg>
<span class="t" style="top:466.500px;height:14.60px;line-height:14.60px;font-size:7.3px;color:#eef3f9;font-weight:bold;left:404.50px;letter-spacing:0.010px;-webkit-text-stroke:0.1px;">Orders</span>
<svg style="left:448.8px;top:466.95px" width="17.5" height="12.5" viewBox="0 0 17.5 12.5"><rect x="0" y="0.500" width="17.500" height="11.500" rx="1.300" fill="#fff"/><rect x="1.600" y="2.100" width="14.300" height="8.300" fill="#0a5caa"/><path fill="#fff" d="M2.600 6.250l2.100-2.200v4.400zM14.900 6.250l-2.100-2.200v4.400z"/><circle cx="8.750" cy="6.250" r="3.200" fill="#fff"/><text x="8.750" y="8.600" font-size="6.400" font-weight="bold" font-family="Liberation Sans, sans-serif" fill="#0a5caa" text-anchor="middle">$</text></svg>
<span class="t" style="top:466.500px;height:14.60px;line-height:14.60px;font-size:7.3px;color:#eef3f9;font-weight:bold;left:470.80px;letter-spacing:-0.248px;-webkit-text-stroke:0.1px;">Pricing</span>
<svg style="left:517px;top:465.70px" width="14" height="15" viewBox="0 0 14 15"><path fill="none" stroke="#fff" stroke-width="1.5" stroke-linejoin="round" d="M3.6 7.2V1h6.6l3 3v8.6H8.6"/><path fill="#fff" d="M9.600 1v3.600h3.600z" opacity="0.850"/><circle cx="4.4" cy="10.4" r="2.7" fill="none" stroke="#fff" stroke-width="1.4"/><path stroke="#fff" stroke-width="1.6" stroke-linecap="round" d="M2.5 12.400L0.8 14.200"/></svg>
<span class="t" style="top:466.500px;height:14.60px;line-height:14.60px;font-size:7.3px;color:#eef3f9;font-weight:bold;left:536.80px;letter-spacing:-0.036px;-webkit-text-stroke:0.1px;">POs</span>
<svg style="left:582.5px;top:468.40px" width="15" height="9.6" viewBox="0 0 15 9.6"><path fill="#fff" d="M0.2 7.7V4.700L2 1.300h3.400v6.400z"/><rect x="5" y="0.200" width="9.800" height="7.500" rx="0.700" fill="#fff"/><path fill="#0a5caa" d="M2.500 2.300h1.900v2H1.500z"/><rect x="9" y="1.400" width="1.900" height="1.600" fill="#5d93c9"/><rect x="11.700" y="1.400" width="1.900" height="1.600" fill="#5d93c9"/><circle cx="3.300" cy="7.900" r="1.500" fill="#fff" stroke="#0a5caa" stroke-width="0.600"/><circle cx="10.400" cy="7.900" r="1.500" fill="#fff" stroke="#0a5caa" stroke-width="0.600"/></svg>
<span class="t" style="top:466.500px;height:14.60px;line-height:14.60px;font-size:7.3px;color:#eef3f9;font-weight:bold;left:603.00px;letter-spacing:0.127px;-webkit-text-stroke:0.1px;">Transfers</span>
<svg style="left:649.5px;top:465.70px" width="14" height="15" viewBox="0 0 14 15"><path fill="none" stroke="#fff" stroke-width="1.5" stroke-linejoin="round" d="M3.6 7.2V1h6.6l3 3v8.6H8.6"/><path fill="#fff" d="M9.600 1v3.600h3.600z" opacity="0.850"/><circle cx="4.4" cy="10.4" r="2.7" fill="none" stroke="#fff" stroke-width="1.4"/><path stroke="#fff" stroke-width="1.6" stroke-linecap="round" d="M2.5 12.400L0.8 14.200"/></svg>
<span class="t" style="top:466.500px;height:14.60px;line-height:14.60px;font-size:7.3px;color:#eef3f9;font-weight:bold;left:669.50px;letter-spacing:0.125px;-webkit-text-stroke:0.1px;">WOs</span>
<svg style="left:715.8px;top:465.70px" width="14" height="15" viewBox="0 0 14 15"><path fill="none" stroke="#fff" stroke-width="1.5" stroke-linejoin="round" d="M3.6 7.2V1h6.6l3 3v8.6H8.6"/><path fill="#fff" d="M9.600 1v3.600h3.600z" opacity="0.850"/><circle cx="4.4" cy="10.4" r="2.7" fill="none" stroke="#fff" stroke-width="1.4"/><path stroke="#fff" stroke-width="1.6" stroke-linecap="round" d="M2.5 12.400L0.8 14.200"/></svg>
<span class="t" style="top:466.500px;height:14.60px;line-height:14.60px;font-size:7.3px;color:#eef3f9;font-weight:bold;left:735.80px;letter-spacing:-0.411px;-webkit-text-stroke:0.1px;">Kit</span>
<svg style="left:783px;top:465.70px" width="11" height="15" viewBox="0 0 11 15"><rect x="0.500" y="1.800" width="10" height="12.600" fill="#cfe0f2"/><rect x="0.500" y="1.800" width="10" height="2.200" fill="#fff"/><path stroke="#0a5caa" stroke-width="0.800" d="M1.600 5.800h7.800M1.600 7.600h7.800M1.600 9.400h7.800M1.600 11.200h7.800M1.600 13h7.800"/><path stroke="#fff" stroke-width="1" d="M2.500 0.400v2M4.500 0.400v2M6.500 0.400v2M8.500 0.400v2"/></svg>
<span class="t" style="top:466.500px;height:14.60px;line-height:14.60px;font-size:7.3px;color:#eef3f9;font-weight:bold;left:801.80px;letter-spacing:-0.056px;-webkit-text-stroke:0.1px;">Notes</span>
<svg style="left:848px;top:466.70px" width="14" height="13" viewBox="0 0 14 13"><path fill="#fff" d="M0.300 4.600h7.500V1l6 5.600-6 5.600V8.600H0.300z"/></svg>
<span class="t" style="top:466.500px;height:14.60px;line-height:14.60px;font-size:7.3px;color:#eef3f9;font-weight:bold;left:868.00px;letter-spacing:-0.169px;-webkit-text-stroke:0.1px;">Projection</span>
<svg style="left:914.8px;top:465.70px" width="14" height="15" viewBox="0 0 14 15"><path fill="none" stroke="#fff" stroke-width="1.5" stroke-linejoin="round" d="M3.6 7.2V1h6.6l3 3v8.6H8.6"/><path fill="#fff" d="M9.600 1v3.600h3.600z" opacity="0.850"/><circle cx="4.4" cy="10.4" r="2.7" fill="none" stroke="#fff" stroke-width="1.4"/><path stroke="#fff" stroke-width="1.6" stroke-linecap="round" d="M2.5 12.400L0.8 14.200"/></svg>
<span class="t" style="top:466.500px;height:14.60px;line-height:14.60px;font-size:7.3px;color:#eef3f9;font-weight:bold;left:934.30px;-webkit-text-stroke:0.1px;">Mat Rev</span>
</div>
</body></html>
